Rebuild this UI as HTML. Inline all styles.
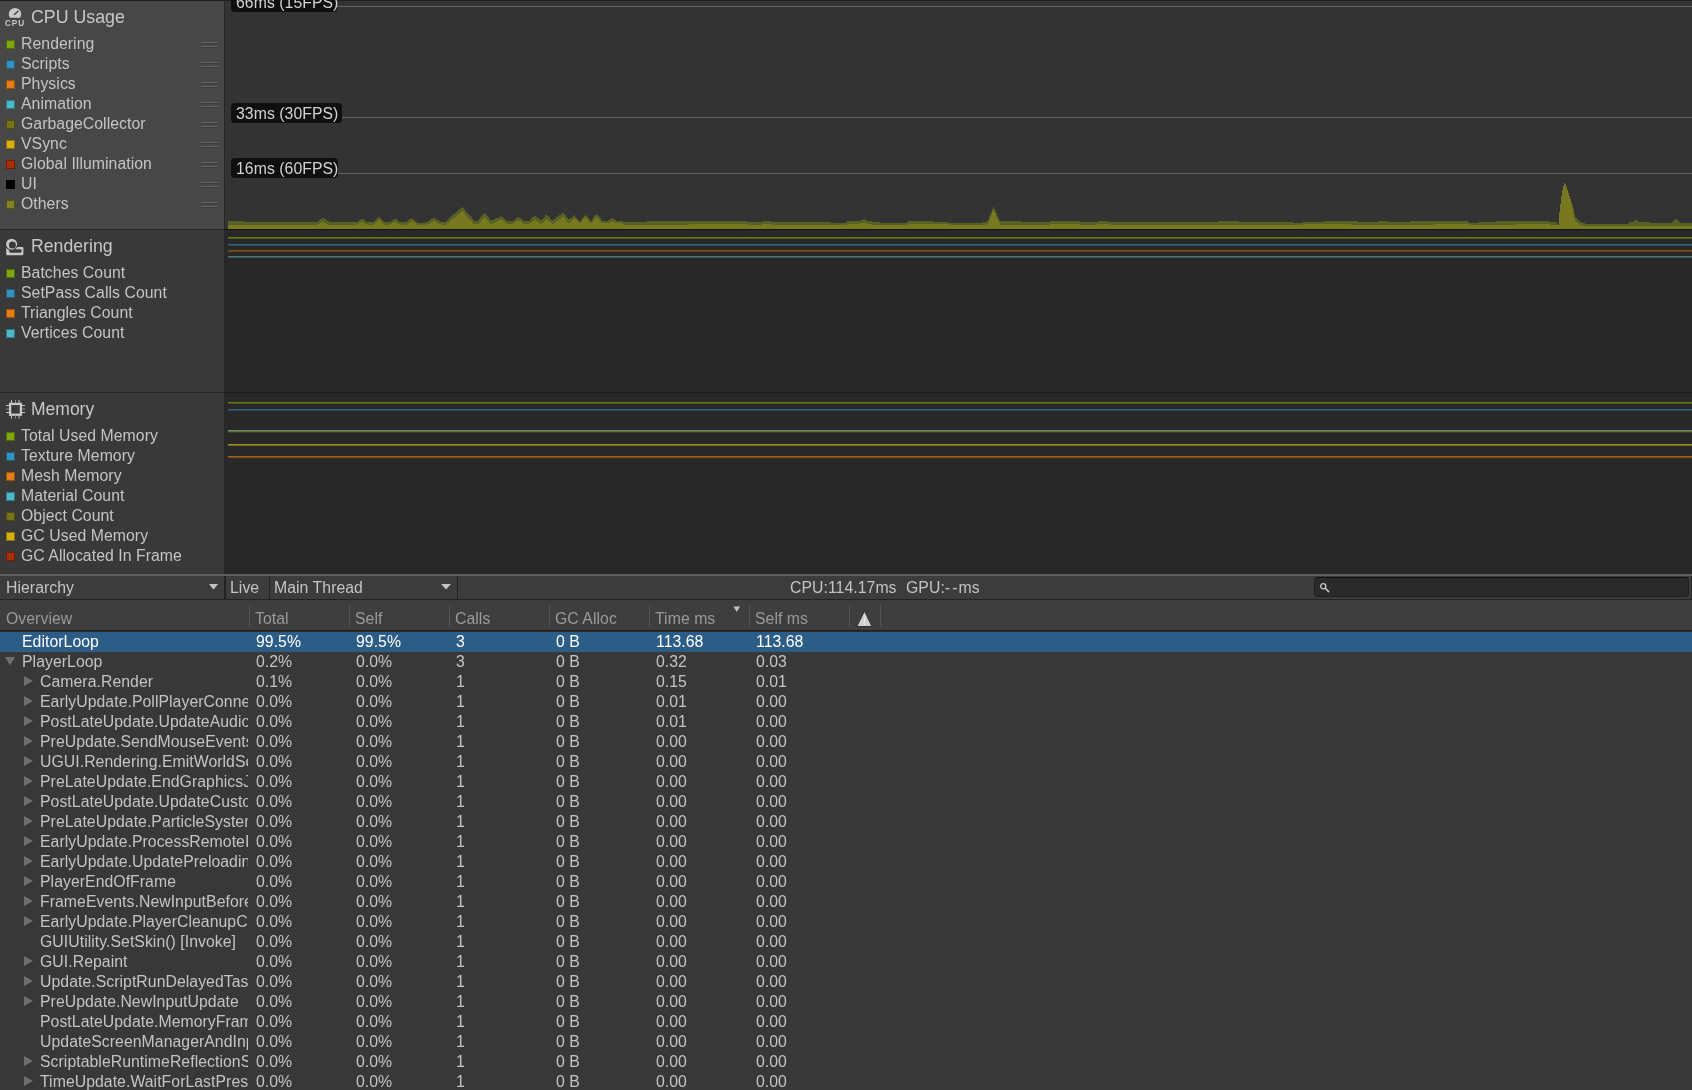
<!DOCTYPE html><html><head><meta charset="utf-8"><title>Profiler</title><style>
html,body{margin:0;padding:0;width:1692px;height:1090px;overflow:hidden;background:#383838;font-family:"Liberation Sans",sans-serif;}
.a{position:absolute}
.t{position:absolute;line-height:20px;white-space:pre;}
</style></head><body><div class="a" style="left:0;top:0;width:1692px;height:1090px;overflow:hidden;will-change:transform">
<div class="a" style="left:0px;top:0px;width:1692px;height:1px;background:#1f1f1f;"></div>
<div class="a" style="left:0px;top:1px;width:224px;height:228px;background:#474747;"></div>
<div class="a" style="left:225px;top:1px;width:1467px;height:228px;background:#333333;"></div>
<div class="a" style="left:224px;top:0px;width:1px;height:574px;background:#262626;"></div>
<div class="a" style="left:0px;top:229px;width:224px;height:1px;background:#262626;"></div>
<div class="a" style="left:224px;top:229px;width:1468px;height:1px;background:#151515;"></div>
<div class="a" style="left:0px;top:230px;width:224px;height:162px;background:#393939;"></div>
<div class="a" style="left:225px;top:230px;width:1467px;height:162px;background:#282828;"></div>
<div class="a" style="left:0px;top:392px;width:224px;height:1px;background:#262626;"></div>
<div class="a" style="left:224px;top:392px;width:1468px;height:1px;background:#1a1a1a;"></div>
<div class="a" style="left:0px;top:393px;width:224px;height:181px;background:#393939;"></div>
<div class="a" style="left:225px;top:393px;width:1467px;height:181px;background:#282828;"></div>
<div class="a" style="left:0px;top:574px;width:1692px;height:2px;background:#5f5f5f;"></div>
<div class="a" style="left:0px;top:576px;width:1692px;height:23px;background:#3c3c3c;"></div>
<div class="a" style="left:0px;top:599px;width:1692px;height:1px;background:#232323;"></div>
<div class="a" style="left:0px;top:600px;width:1692px;height:30px;background:#3e3e3e;"></div>
<div class="a" style="left:0px;top:630px;width:1692px;height:1px;background:#1f1f1f;"></div>
<div class="a" style="left:0px;top:631px;width:1692px;height:1px;background:#2d2b29;"></div>
<div class="a" style="left:0px;top:632px;width:1692px;height:458px;background:#383838;"></div>
<div class="a" style="left:337px;top:6px;width:1355px;height:1px;background:#646464;"></div>
<div class="a" style="left:342px;top:117px;width:1350px;height:1px;background:#646464;"></div>
<div class="a" style="left:338px;top:173px;width:1354px;height:1px;background:#646464;"></div>
<svg class="a" style="left:225px;top:0px" width="1467" height="229" viewBox="0 0 1467 229"><polygon points="3.0,221.10 4.0,221.10 5.0,221.10 6.0,221.10 7.0,221.10 8.0,221.10 9.0,221.10 10.0,221.10 11.0,221.10 12.0,221.10 13.0,221.10 14.0,221.10 15.0,221.10 16.0,221.10 17.0,221.10 18.0,221.10 19.0,221.60 20.0,221.60 21.0,221.60 22.0,221.60 23.0,221.60 24.0,221.60 25.0,221.60 26.0,221.60 27.0,221.60 28.0,221.60 29.0,221.60 30.0,221.60 31.0,221.60 32.0,221.60 33.0,221.60 34.0,221.60 35.0,221.60 36.0,221.60 37.0,221.60 38.0,221.60 39.0,221.60 40.0,221.60 41.0,221.60 42.0,221.60 43.0,221.60 44.0,221.60 45.0,222.40 46.0,222.40 47.0,222.40 48.0,222.40 49.0,222.40 50.0,222.40 51.0,222.40 52.0,222.40 53.0,222.40 54.0,222.40 55.0,222.40 56.0,222.40 57.0,222.40 58.0,222.40 59.0,222.40 60.0,222.40 61.0,222.40 62.0,222.40 63.0,222.40 64.0,222.40 65.0,222.40 66.0,222.40 67.0,222.40 68.0,222.40 69.0,222.40 70.0,222.40 71.0,222.40 72.0,222.40 73.0,222.40 74.0,222.40 75.0,222.40 76.0,222.40 77.0,222.40 78.0,222.40 79.0,222.40 80.0,222.40 81.0,222.40 82.0,222.40 83.0,222.40 84.0,222.40 85.0,222.40 86.0,222.40 87.0,222.40 88.0,222.40 89.0,222.40 90.0,222.40 91.0,222.40 92.0,222.40 93.0,221.90 94.0,220.60 95.0,219.45 96.0,218.95 97.0,218.45 98.0,217.95 99.0,218.45 100.0,218.95 101.0,219.45 102.0,220.60 103.0,221.10 104.0,221.60 105.0,221.60 106.0,221.60 107.0,221.60 108.0,221.60 109.0,221.60 110.0,221.60 111.0,221.60 112.0,221.60 113.0,221.60 114.0,221.60 115.0,221.60 116.0,221.90 117.0,221.90 118.0,221.90 119.0,221.90 120.0,221.90 121.0,221.90 122.0,221.90 123.0,221.90 124.0,221.60 125.0,221.60 126.0,221.60 127.0,221.60 128.0,221.60 129.0,221.60 130.0,221.60 131.0,221.60 132.0,221.90 133.0,221.40 134.0,220.25 135.0,219.75 136.0,219.25 137.0,218.75 138.0,219.25 139.0,219.75 140.0,220.25 141.0,221.40 142.0,221.90 143.0,222.40 144.0,222.40 145.0,222.40 146.0,222.40 147.0,222.40 148.0,222.40 149.0,221.57 150.0,220.08 151.0,219.25 152.0,218.42 153.0,217.58 154.0,216.75 155.0,217.58 156.0,218.42 157.0,219.25 158.0,220.08 159.0,221.57 160.0,222.40 161.0,222.40 162.0,222.40 163.0,222.40 164.0,222.40 165.0,221.90 166.0,221.40 167.0,220.25 168.0,219.75 169.0,219.25 170.0,218.75 171.0,219.25 172.0,219.75 173.0,220.25 174.0,221.40 175.0,221.90 176.0,222.40 177.0,222.40 178.0,222.40 179.0,222.40 180.0,222.40 181.0,222.40 182.0,221.73 183.0,220.42 184.0,219.75 185.0,219.08 186.0,218.42 187.0,218.55 188.0,219.22 189.0,219.88 190.0,220.55 191.0,221.22 192.0,222.53 193.0,223.20 194.0,223.20 195.0,223.20 196.0,223.20 197.0,223.20 198.0,223.20 199.0,223.20 200.0,221.90 201.0,221.90 202.0,221.90 203.0,221.83 204.0,220.61 205.0,220.04 206.0,219.46 207.0,218.89 208.0,218.32 209.0,217.75 210.0,218.32 211.0,218.89 212.0,219.46 213.0,220.04 214.0,220.61 215.0,221.83 216.0,221.90 217.0,221.90 218.0,221.90 219.0,221.90 220.0,221.90 221.0,221.90 222.0,220.60 223.0,219.77 224.0,218.15 225.0,217.33 226.0,216.50 227.0,215.68 228.0,214.86 229.0,214.03 230.0,213.21 231.0,212.39 232.0,211.56 233.0,210.74 234.0,209.91 235.0,209.09 236.0,208.27 237.0,207.44 237.6,206.95 238.0,207.46 239.0,208.73 240.0,210.00 241.0,211.28 242.0,212.55 243.0,213.82 244.0,215.10 245.0,215.56 246.0,216.72 247.0,217.89 248.0,219.70 249.0,220.90 250.0,220.90 251.0,220.90 252.0,220.90 253.0,220.90 254.0,219.75 255.0,218.03 256.0,216.95 257.0,215.87 258.0,214.80 259.0,213.72 259.9,212.75 260.0,212.88 261.0,214.15 262.0,215.42 263.0,216.70 264.0,217.97 265.0,219.89 266.0,220.40 267.0,220.40 268.0,220.25 269.0,219.74 270.0,218.59 271.0,218.08 272.0,217.57 273.0,217.87 274.0,217.36 275.0,216.86 276.0,216.35 276.2,216.25 277.0,216.85 278.0,217.61 279.0,218.36 280.0,219.12 281.0,220.52 282.0,221.20 283.0,221.20 284.0,221.20 285.0,221.20 286.0,221.20 287.0,221.20 288.0,221.20 289.0,220.50 290.0,219.14 291.0,218.44 292.0,217.74 293.0,217.03 293.4,216.75 294.0,217.17 295.0,217.88 296.0,218.58 297.0,219.28 298.0,220.64 299.0,221.20 300.0,221.20 301.0,221.20 302.0,221.20 303.0,221.20 304.0,221.20 305.0,220.54 306.0,218.44 307.0,217.78 308.0,217.13 309.0,216.47 309.8,215.95 310.0,216.08 311.0,216.74 312.0,217.39 313.0,218.05 314.0,218.70 315.0,220.01 316.0,220.40 317.0,219.78 318.0,218.09 319.0,217.05 320.0,216.01 321.0,214.97 321.4,214.55 322.0,215.11 323.0,216.04 324.0,216.96 325.0,217.89 326.0,219.47 327.0,220.40 328.0,220.40 329.0,219.84 330.0,218.49 331.0,217.79 332.0,217.09 333.0,216.39 334.0,215.69 335.0,214.99 336.0,214.29 337.0,213.59 338.0,212.89 338.2,212.75 339.0,213.68 340.0,214.85 341.0,216.02 342.0,217.18 343.0,218.35 344.0,220.17 345.0,218.60 346.0,217.45 347.0,217.90 348.0,216.75 349.0,215.60 349.3,215.25 350.0,216.00 351.0,217.07 352.0,218.14 353.0,219.21 354.0,220.28 355.0,221.50 356.0,220.05 357.0,218.76 358.0,217.46 359.0,216.16 360.0,214.87 360.4,214.35 361.0,215.10 362.0,216.35 363.0,217.60 364.0,218.85 365.0,220.10 366.0,221.50 367.0,220.08 368.0,218.00 369.0,216.73 370.0,215.46 371.0,214.19 371.5,213.55 372.0,214.16 373.0,215.39 374.0,216.62 375.0,217.85 376.0,219.08 377.0,220.70 378.0,220.70 379.0,220.70 380.0,220.70 381.0,220.70 382.0,220.70 383.0,220.70 384.0,220.27 385.0,219.16 386.0,218.70 387.0,218.24 387.4,218.05 388.0,218.33 389.0,218.80 390.0,219.28 391.0,220.40 392.0,220.70 393.0,220.70 394.0,220.70 395.0,220.70 396.0,220.70 397.0,220.70 398.0,221.70 399.0,221.70 400.0,222.40 401.0,222.40 402.0,222.40 403.0,222.40 404.0,222.40 405.0,222.40 406.0,222.40 407.0,222.40 408.0,222.40 409.0,222.40 410.0,222.40 411.0,222.40 412.0,222.40 413.0,222.40 414.0,222.40 415.0,222.40 416.0,222.40 417.0,222.40 418.0,222.40 419.0,222.40 420.0,222.40 421.0,222.40 422.0,221.10 423.0,221.10 424.0,221.10 425.0,221.10 426.0,221.10 427.0,221.10 428.0,221.10 429.0,221.10 430.0,221.10 431.0,221.10 432.0,221.10 433.0,221.10 434.0,221.10 435.0,221.10 436.0,221.10 437.0,221.10 438.0,221.10 439.0,221.10 440.0,221.10 441.0,221.10 442.0,221.10 443.0,221.10 444.0,221.10 445.0,221.10 446.0,221.10 447.0,221.10 448.0,221.10 449.0,221.10 450.0,221.10 451.0,221.10 452.0,221.10 453.0,221.10 454.0,221.10 455.0,221.10 456.0,221.10 457.0,221.10 458.0,221.10 459.0,221.10 460.0,221.10 461.0,221.10 462.0,221.10 463.0,221.10 464.0,221.10 465.0,221.40 466.0,221.40 467.0,221.40 468.0,221.40 469.0,221.40 470.0,221.40 471.0,221.40 472.0,221.40 473.0,221.40 474.0,221.40 475.0,221.40 476.0,221.40 477.0,221.40 478.0,221.40 479.0,221.40 480.0,221.40 481.0,221.40 482.0,221.40 483.0,221.40 484.0,221.40 485.0,221.40 486.0,221.40 487.0,221.40 488.0,221.40 489.0,221.40 490.0,221.40 491.0,221.40 492.0,221.40 493.0,221.40 494.0,221.40 495.0,221.40 496.0,221.40 497.0,221.40 498.0,221.40 499.0,221.40 500.0,221.40 501.0,221.40 502.0,221.40 503.0,221.40 504.0,221.40 505.0,221.40 506.0,221.40 507.0,221.40 508.0,221.40 509.0,221.40 510.0,221.40 511.0,221.40 512.0,221.40 513.0,221.40 514.0,221.40 515.0,221.40 516.0,221.40 517.0,221.40 518.0,221.40 519.0,221.40 520.0,221.40 521.0,221.40 522.0,221.40 523.0,221.90 524.0,221.90 525.0,221.90 526.0,221.90 527.0,221.90 528.0,221.90 529.0,221.90 530.0,221.90 531.0,221.90 532.0,221.90 533.0,221.90 534.0,221.90 535.0,221.90 536.0,221.90 537.0,221.90 538.0,221.40 539.0,221.40 540.0,221.40 541.0,221.40 542.0,221.40 543.0,221.40 544.0,221.40 545.0,221.40 546.0,221.40 547.0,221.90 548.0,221.90 549.0,221.90 550.0,221.90 551.0,221.90 552.0,221.90 553.0,221.90 554.0,221.90 555.0,221.90 556.0,221.90 557.0,221.90 558.0,221.90 559.0,221.90 560.0,221.90 561.0,221.90 562.0,221.90 563.0,221.90 564.0,221.90 565.0,221.90 566.0,221.90 567.0,221.90 568.0,221.90 569.0,221.90 570.0,221.90 571.0,221.90 572.0,221.90 573.0,221.90 574.0,221.90 575.0,221.90 576.0,221.90 577.0,221.90 578.0,221.90 579.0,221.60 580.0,221.60 581.0,221.60 582.0,221.60 583.0,221.60 584.0,221.60 585.0,221.60 586.0,221.60 587.0,221.60 588.0,221.60 589.0,221.60 590.0,221.60 591.0,221.60 592.0,221.60 593.0,221.60 594.0,221.60 595.0,221.60 596.0,221.60 597.0,221.60 598.0,221.60 599.0,221.60 600.0,221.60 601.0,221.60 602.0,221.60 603.0,221.60 604.0,221.60 605.0,221.60 606.0,223.20 607.0,223.20 608.0,223.20 609.0,223.20 610.0,223.20 611.0,223.20 612.0,223.20 613.0,223.20 614.0,223.20 615.0,223.20 616.0,223.20 617.0,223.20 618.0,223.20 619.0,223.20 620.0,223.20 621.0,223.20 622.0,221.40 623.0,221.40 624.0,221.40 625.0,221.40 626.0,221.40 627.0,221.40 628.0,221.40 629.0,221.40 630.0,221.40 631.0,221.40 632.0,221.40 633.0,221.40 634.0,221.15 635.0,220.90 636.0,220.00 637.0,219.75 638.0,219.50 639.0,219.25 640.0,219.58 641.0,219.92 642.0,220.90 643.0,221.23 644.0,221.40 645.0,221.40 646.0,221.40 647.0,221.60 648.0,221.60 649.0,221.60 650.0,221.60 651.0,221.60 652.0,221.60 653.0,221.60 654.0,221.60 655.0,222.70 656.0,222.70 657.0,222.70 658.0,222.70 659.0,222.70 660.0,222.70 661.0,222.70 662.0,222.70 663.0,222.70 664.0,222.70 665.0,222.70 666.0,222.70 667.0,222.70 668.0,222.70 669.0,222.70 670.0,222.70 671.0,222.70 672.0,222.70 673.0,222.70 674.0,222.70 675.0,222.70 676.0,223.20 677.0,223.20 678.0,223.20 679.0,223.20 680.0,223.20 681.0,223.20 682.0,223.20 683.0,221.40 684.0,221.40 685.0,221.40 686.0,221.40 687.0,221.40 688.0,221.40 689.0,221.40 690.0,221.40 691.0,221.40 692.0,221.40 693.0,221.40 694.0,221.40 695.0,221.40 696.0,221.40 697.0,221.40 698.0,221.40 699.0,221.40 700.0,221.40 701.0,221.40 702.0,221.40 703.0,221.40 704.0,221.40 705.0,221.40 706.0,221.40 707.0,221.40 708.0,221.40 709.0,222.20 710.0,222.20 711.0,222.20 712.0,222.20 713.0,222.20 714.0,222.20 715.0,222.20 716.0,222.20 717.0,222.20 718.0,222.20 719.0,222.20 720.0,222.20 721.0,222.20 722.0,222.20 723.0,222.20 724.0,223.20 725.0,223.20 726.0,223.20 727.0,223.20 728.0,223.20 729.0,223.20 730.0,223.20 731.0,223.20 732.0,223.20 733.0,223.20 734.0,223.20 735.0,223.20 736.0,223.20 737.0,223.20 738.0,223.20 739.0,223.20 740.0,223.20 741.0,223.20 742.0,223.20 743.0,223.20 744.0,223.20 745.0,223.20 746.0,223.20 747.0,223.20 748.0,223.20 749.0,223.20 750.0,223.20 751.0,223.20 752.0,223.20 753.0,223.20 754.0,223.20 755.0,223.20 756.0,223.20 757.0,223.20 758.0,222.40 759.0,222.40 760.0,222.40 761.0,222.40 762.0,222.40 763.0,220.04 764.0,217.62 765.0,215.21 766.0,212.79 767.0,210.38 768.0,207.96 768.5,206.75 769.0,207.87 770.0,210.10 771.0,212.33 772.0,214.56 773.0,216.79 774.0,219.02 775.0,221.10 776.0,221.10 777.0,221.10 778.0,221.10 779.0,221.10 780.0,221.10 781.0,221.10 782.0,221.10 783.0,221.10 784.0,221.10 785.0,221.10 786.0,221.10 787.0,221.10 788.0,221.10 789.0,221.10 790.0,221.10 791.0,221.10 792.0,221.10 793.0,221.10 794.0,221.10 795.0,221.10 796.0,221.90 797.0,221.90 798.0,221.90 799.0,221.90 800.0,221.90 801.0,221.90 802.0,221.90 803.0,221.90 804.0,221.90 805.0,221.90 806.0,221.90 807.0,221.90 808.0,221.90 809.0,221.90 810.0,221.90 811.0,221.90 812.0,221.90 813.0,221.90 814.0,221.90 815.0,221.90 816.0,221.90 817.0,221.90 818.0,221.90 819.0,221.90 820.0,221.90 821.0,221.90 822.0,221.90 823.0,221.90 824.0,221.90 825.0,221.90 826.0,220.60 827.0,220.60 828.0,220.60 829.0,220.60 830.0,220.60 831.0,220.60 832.0,220.60 833.0,220.60 834.0,220.60 835.0,220.60 836.0,220.60 837.0,220.60 838.0,220.60 839.0,220.60 840.0,220.60 841.0,220.60 842.0,220.60 843.0,220.60 844.0,220.60 845.0,220.60 846.0,220.60 847.0,220.60 848.0,220.60 849.0,220.60 850.0,220.60 851.0,220.60 852.0,220.60 853.0,220.60 854.0,220.60 855.0,221.90 856.0,221.90 857.0,221.90 858.0,221.90 859.0,221.90 860.0,221.90 861.0,221.90 862.0,221.90 863.0,221.90 864.0,221.90 865.0,221.90 866.0,221.90 867.0,221.90 868.0,221.90 869.0,221.90 870.0,221.90 871.0,221.90 872.0,221.90 873.0,221.40 874.0,221.40 875.0,221.40 876.0,221.40 877.0,221.40 878.0,221.40 879.0,221.40 880.0,221.40 881.0,221.40 882.0,221.40 883.0,221.40 884.0,221.90 885.0,221.90 886.0,221.90 887.0,221.90 888.0,221.90 889.0,221.90 890.0,221.90 891.0,221.90 892.0,221.90 893.0,221.90 894.0,221.90 895.0,221.90 896.0,221.90 897.0,221.90 898.0,221.90 899.0,221.90 900.0,221.90 901.0,221.90 902.0,221.90 903.0,221.90 904.0,221.90 905.0,221.90 906.0,221.90 907.0,222.40 908.0,222.40 909.0,222.40 910.0,222.40 911.0,222.40 912.0,222.40 913.0,222.40 914.0,222.40 915.0,222.40 916.0,222.40 917.0,222.40 918.0,222.40 919.0,222.40 920.0,222.40 921.0,222.40 922.0,222.40 923.0,222.40 924.0,222.40 925.0,222.40 926.0,222.40 927.0,222.40 928.0,222.40 929.0,222.40 930.0,222.40 931.0,222.40 932.0,222.40 933.0,222.40 934.0,222.40 935.0,222.40 936.0,222.40 937.0,222.40 938.0,222.40 939.0,222.40 940.0,222.40 941.0,222.40 942.0,222.40 943.0,222.40 944.0,222.40 945.0,222.40 946.0,222.40 947.0,222.40 948.0,222.40 949.0,222.40 950.0,222.40 951.0,222.40 952.0,222.40 953.0,222.40 954.0,222.40 955.0,222.40 956.0,222.40 957.0,222.40 958.0,222.40 959.0,222.40 960.0,222.40 961.0,222.40 962.0,222.40 963.0,222.40 964.0,222.40 965.0,222.40 966.0,222.40 967.0,221.90 968.0,221.90 969.0,221.90 970.0,221.90 971.0,221.90 972.0,221.90 973.0,221.90 974.0,221.90 975.0,221.90 976.0,221.90 977.0,221.90 978.0,221.90 979.0,221.90 980.0,221.90 981.0,221.90 982.0,221.90 983.0,221.90 984.0,221.90 985.0,221.90 986.0,221.90 987.0,221.90 988.0,221.90 989.0,221.90 990.0,221.90 991.0,221.90 992.0,221.90 993.0,221.90 994.0,221.10 995.0,221.10 996.0,221.10 997.0,221.10 998.0,221.10 999.0,221.10 1000.0,221.10 1001.0,221.10 1002.0,221.10 1003.0,221.10 1004.0,221.10 1005.0,221.10 1006.0,221.10 1007.0,221.10 1008.0,221.10 1009.0,221.10 1010.0,221.10 1011.0,221.10 1012.0,221.10 1013.0,221.10 1014.0,221.90 1015.0,221.90 1016.0,221.90 1017.0,221.90 1018.0,221.90 1019.0,221.90 1020.0,221.90 1021.0,221.90 1022.0,221.90 1023.0,221.90 1024.0,221.90 1025.0,221.90 1026.0,221.90 1027.0,221.90 1028.0,221.90 1029.0,221.90 1030.0,221.90 1031.0,221.90 1032.0,221.90 1033.0,221.90 1034.0,222.40 1035.0,222.40 1036.0,222.40 1037.0,222.40 1038.0,222.40 1039.0,222.40 1040.0,222.40 1041.0,222.40 1042.0,222.40 1043.0,222.40 1044.0,222.40 1045.0,222.40 1046.0,222.40 1047.0,222.40 1048.0,222.40 1049.0,222.40 1050.0,222.40 1051.0,222.40 1052.0,222.40 1053.0,222.40 1054.0,222.40 1055.0,222.40 1056.0,222.40 1057.0,222.40 1058.0,222.40 1059.0,222.40 1060.0,222.40 1061.0,222.40 1062.0,222.40 1063.0,222.40 1064.0,222.40 1065.0,222.40 1066.0,222.40 1067.0,222.40 1068.0,222.40 1069.0,222.70 1070.0,222.70 1071.0,222.70 1072.0,222.70 1073.0,222.70 1074.0,222.70 1075.0,222.70 1076.0,222.70 1077.0,222.70 1078.0,222.70 1079.0,222.20 1080.0,222.20 1081.0,222.20 1082.0,222.20 1083.0,222.20 1084.0,222.20 1085.0,222.20 1086.0,222.20 1087.0,222.20 1088.0,222.20 1089.0,222.20 1090.0,222.20 1091.0,222.20 1092.0,222.20 1093.0,222.20 1094.0,222.20 1095.0,222.20 1096.0,222.20 1097.0,222.20 1098.0,222.20 1099.0,221.40 1100.0,221.40 1101.0,221.40 1102.0,221.40 1103.0,221.40 1104.0,221.40 1105.0,221.40 1106.0,221.40 1107.0,221.40 1108.0,221.40 1109.0,221.40 1110.0,221.40 1111.0,221.40 1112.0,221.40 1113.0,221.40 1114.0,221.40 1115.0,221.40 1116.0,221.40 1117.0,221.40 1118.0,221.40 1119.0,221.40 1120.0,221.40 1121.0,221.40 1122.0,221.40 1123.0,221.40 1124.0,221.40 1125.0,221.40 1126.0,221.10 1127.0,221.10 1128.0,221.10 1129.0,221.10 1130.0,221.10 1131.0,221.10 1132.0,221.10 1133.0,221.90 1134.0,221.90 1135.0,221.90 1136.0,221.90 1137.0,221.90 1138.0,221.90 1139.0,221.90 1140.0,221.90 1141.0,221.90 1142.0,221.90 1143.0,221.90 1144.0,221.90 1145.0,221.90 1146.0,221.90 1147.0,221.90 1148.0,221.90 1149.0,221.90 1150.0,221.90 1151.0,221.90 1152.0,221.90 1153.0,221.90 1154.0,221.10 1155.0,221.10 1156.0,221.10 1157.0,221.10 1158.0,221.10 1159.0,221.10 1160.0,221.10 1161.0,221.10 1162.0,221.10 1163.0,221.60 1164.0,221.60 1165.0,221.60 1166.0,221.60 1167.0,221.60 1168.0,221.60 1169.0,221.60 1170.0,221.60 1171.0,221.60 1172.0,221.60 1173.0,221.60 1174.0,221.60 1175.0,221.60 1176.0,221.60 1177.0,221.60 1178.0,221.60 1179.0,221.60 1180.0,221.60 1181.0,221.60 1182.0,221.60 1183.0,221.60 1184.0,221.60 1185.0,221.60 1186.0,221.10 1187.0,221.10 1188.0,221.10 1189.0,221.10 1190.0,221.10 1191.0,221.10 1192.0,221.10 1193.0,221.10 1194.0,221.10 1195.0,221.10 1196.0,221.10 1197.0,221.10 1198.0,221.10 1199.0,221.10 1200.0,221.10 1201.0,221.10 1202.0,221.10 1203.0,221.10 1204.0,221.10 1205.0,221.10 1206.0,221.10 1207.0,221.10 1208.0,221.10 1209.0,221.10 1210.0,221.10 1211.0,220.60 1212.0,220.60 1213.0,220.60 1214.0,220.60 1215.0,220.60 1216.0,220.60 1217.0,220.60 1218.0,220.60 1219.0,220.60 1220.0,220.60 1221.0,220.60 1222.0,220.60 1223.0,220.60 1224.0,220.60 1225.0,220.60 1226.0,220.60 1227.0,220.60 1228.0,220.60 1229.0,220.60 1230.0,220.60 1231.0,220.60 1232.0,220.60 1233.0,220.60 1234.0,220.60 1235.0,220.60 1236.0,220.60 1237.0,220.60 1238.0,220.60 1239.0,220.60 1240.0,220.60 1241.0,220.60 1242.0,220.60 1243.0,220.60 1244.0,223.20 1245.0,223.20 1246.0,223.20 1247.0,223.20 1248.0,223.20 1249.0,223.20 1250.0,223.20 1251.0,223.20 1252.0,223.20 1253.0,223.20 1254.0,222.40 1255.0,222.40 1256.0,222.40 1257.0,222.40 1258.0,222.40 1259.0,222.40 1260.0,222.40 1261.0,222.40 1262.0,222.40 1263.0,222.40 1264.0,222.40 1265.0,222.40 1266.0,222.40 1267.0,222.40 1268.0,222.40 1269.0,222.40 1270.0,222.40 1271.0,221.10 1272.0,221.10 1273.0,221.10 1274.0,221.10 1275.0,221.10 1276.0,221.10 1277.0,221.10 1278.0,221.10 1279.0,221.10 1280.0,221.10 1281.0,221.10 1282.0,221.10 1283.0,221.10 1284.0,221.10 1285.0,221.10 1286.0,221.10 1287.0,221.10 1288.0,221.10 1289.0,221.10 1290.0,221.10 1291.0,221.10 1292.0,221.40 1293.0,221.40 1294.0,221.40 1295.0,221.40 1296.0,221.40 1297.0,221.40 1298.0,221.40 1299.0,221.40 1300.0,221.40 1301.0,221.40 1302.0,221.40 1303.0,221.40 1304.0,221.40 1305.0,221.40 1306.0,221.40 1307.0,221.40 1308.0,221.40 1309.0,221.40 1310.0,221.40 1311.0,221.40 1312.0,221.40 1313.0,221.40 1314.0,221.40 1315.0,221.40 1316.0,221.40 1317.0,221.40 1318.0,221.40 1319.0,221.40 1320.0,221.40 1321.0,221.40 1322.0,221.40 1323.0,221.40 1324.0,221.40 1325.0,222.40 1326.0,222.40 1327.0,222.40 1328.0,222.40 1329.0,222.40 1330.0,222.40 1331.0,222.40 1332.0,222.40 1333.0,225.00 1333.5,225.00 1334.0,218.10 1334.3,214.35 1335.0,208.17 1336.0,199.35 1337.0,193.35 1338.0,187.35 1339.0,183.78 1339.4,182.35 1340.0,183.47 1341.0,185.35 1342.0,188.27 1343.0,191.18 1344.0,194.10 1345.0,197.02 1345.8,199.35 1346.0,199.52 1347.0,204.35 1348.0,206.57 1349.0,211.40 1349.9,215.75 1350.0,215.88 1351.0,217.16 1352.0,218.45 1353.0,219.12 1354.0,221.23 1355.0,221.25 1356.0,222.02 1357.0,222.35 1358.0,222.68 1359.0,223.00 1360.0,223.50 1361.0,223.50 1362.0,223.50 1363.0,223.50 1364.0,223.50 1365.0,223.50 1366.0,223.50 1367.0,223.50 1368.0,223.50 1369.0,223.50 1370.0,223.50 1371.0,223.50 1372.0,223.50 1373.0,223.50 1374.0,223.50 1375.0,223.50 1376.0,223.50 1377.0,223.50 1378.0,223.50 1379.0,223.50 1380.0,223.50 1381.0,223.50 1382.0,223.50 1383.0,223.80 1384.0,223.80 1385.0,223.80 1386.0,223.80 1387.0,223.80 1388.0,223.80 1389.0,223.80 1390.0,223.80 1391.0,223.80 1392.0,223.80 1393.0,223.80 1394.0,223.80 1395.0,223.80 1396.0,223.80 1397.0,223.80 1398.0,223.80 1399.0,223.80 1400.0,223.80 1401.0,223.80 1402.0,223.80 1403.0,223.80 1404.0,222.20 1405.0,222.20 1406.0,222.20 1407.0,222.20 1408.0,222.20 1409.0,221.27 1410.0,220.13 1411.0,219.00 1412.0,220.13 1413.0,221.27 1414.0,222.20 1415.0,222.20 1416.0,222.20 1417.0,222.20 1418.0,222.20 1419.0,222.20 1420.0,222.20 1421.0,222.20 1422.0,222.20 1423.0,222.20 1424.0,222.20 1425.0,222.20 1426.0,223.00 1427.0,223.00 1428.0,223.00 1429.0,223.00 1430.0,223.00 1431.0,223.00 1432.0,223.00 1433.0,223.00 1434.0,223.00 1435.0,223.00 1436.0,223.00 1437.0,223.00 1438.0,223.00 1439.0,223.00 1440.0,223.00 1441.0,223.00 1442.0,223.00 1443.0,223.00 1444.0,223.00 1445.0,223.00 1446.0,223.00 1447.0,223.00 1448.0,221.90 1449.0,220.60 1450.0,219.30 1451.0,218.00 1452.0,219.30 1453.0,220.60 1454.0,221.90 1455.0,223.00 1456.0,223.00 1457.0,223.00 1458.0,223.00 1459.0,223.00 1460.0,223.00 1461.0,223.00 1462.0,223.00 1463.0,223.00 1464.0,223.00 1465.0,223.00 1466.0,223.00 1467.0,223.00 1467,229 3,229" fill="#566223" shape-rendering="crispEdges"/><polygon points="3.0,224.50 4.0,224.50 5.0,224.50 6.0,224.50 7.0,224.50 8.0,224.50 9.0,224.50 10.0,224.50 11.0,224.50 12.0,224.50 13.0,224.50 14.0,224.50 15.0,224.50 16.0,224.50 17.0,224.50 18.0,224.50 19.0,225.00 20.0,225.00 21.0,225.00 22.0,225.00 23.0,225.00 24.0,225.00 25.0,225.00 26.0,225.00 27.0,225.00 28.0,225.00 29.0,225.00 30.0,225.00 31.0,225.00 32.0,225.00 33.0,225.00 34.0,225.00 35.0,225.00 36.0,225.00 37.0,225.00 38.0,225.00 39.0,225.00 40.0,225.00 41.0,225.00 42.0,225.00 43.0,225.00 44.0,225.00 45.0,225.00 46.0,225.00 47.0,225.00 48.0,225.00 49.0,225.00 50.0,225.00 51.0,225.00 52.0,225.00 53.0,225.00 54.0,225.00 55.0,225.00 56.0,225.00 57.0,225.00 58.0,225.00 59.0,225.00 60.0,225.00 61.0,225.00 62.0,225.00 63.0,225.00 64.0,225.00 65.0,225.00 66.0,225.00 67.0,225.00 68.0,225.00 69.0,225.00 70.0,225.00 71.0,225.00 72.0,225.00 73.0,225.00 74.0,225.00 75.0,225.00 76.0,225.00 77.0,225.00 78.0,225.00 79.0,225.00 80.0,225.00 81.0,225.00 82.0,225.00 83.0,225.00 84.0,225.00 85.0,225.00 86.0,225.00 87.0,225.00 88.0,225.00 89.0,225.00 90.0,225.00 91.0,225.00 92.0,225.00 93.0,224.50 94.0,224.00 95.0,223.50 96.0,223.00 97.0,222.50 98.0,222.00 99.0,222.50 100.0,223.00 101.0,223.50 102.0,224.00 103.0,224.50 104.0,225.00 105.0,225.00 106.0,225.00 107.0,225.00 108.0,225.00 109.0,225.00 110.0,225.00 111.0,225.00 112.0,225.00 113.0,225.00 114.0,225.00 115.0,225.00 116.0,224.50 117.0,224.50 118.0,224.50 119.0,224.50 120.0,224.50 121.0,224.50 122.0,224.50 123.0,224.50 124.0,225.00 125.0,225.00 126.0,225.00 127.0,225.00 128.0,225.00 129.0,225.00 130.0,225.00 131.0,225.00 132.0,224.50 133.0,224.00 134.0,223.50 135.0,223.00 136.0,222.50 137.0,222.00 138.0,222.50 139.0,223.00 140.0,223.50 141.0,224.00 142.0,224.50 143.0,225.00 144.0,225.00 145.0,225.00 146.0,225.00 147.0,225.00 148.0,225.00 149.0,224.17 150.0,223.33 151.0,222.50 152.0,221.67 153.0,220.83 154.0,220.00 155.0,220.83 156.0,221.67 157.0,222.50 158.0,223.33 159.0,224.17 160.0,225.00 161.0,225.00 162.0,225.00 163.0,225.00 164.0,225.00 165.0,224.50 166.0,224.00 167.0,223.50 168.0,223.00 169.0,222.50 170.0,222.00 171.0,222.50 172.0,223.00 173.0,223.50 174.0,224.00 175.0,224.50 176.0,225.00 177.0,225.00 178.0,225.00 179.0,225.00 180.0,225.00 181.0,225.00 182.0,224.33 183.0,223.67 184.0,223.00 185.0,222.33 186.0,221.67 187.0,221.00 188.0,221.67 189.0,222.33 190.0,223.00 191.0,223.67 192.0,224.33 193.0,225.00 194.0,225.00 195.0,225.00 196.0,225.00 197.0,225.00 198.0,225.00 199.0,225.00 200.0,224.50 201.0,224.50 202.0,224.50 203.0,224.43 204.0,223.86 205.0,223.29 206.0,222.71 207.0,222.14 208.0,221.57 209.0,221.00 210.0,221.57 211.0,222.14 212.0,222.71 213.0,223.29 214.0,223.86 215.0,224.43 216.0,224.50 217.0,224.50 218.0,224.50 219.0,224.50 220.0,224.50 221.0,224.50 222.0,223.85 223.0,223.02 224.0,222.20 225.0,221.38 226.0,220.55 227.0,219.73 228.0,218.91 229.0,218.08 230.0,217.26 231.0,216.44 232.0,215.61 233.0,214.79 234.0,213.96 235.0,213.14 236.0,212.32 237.0,211.49 237.6,211.00 238.0,211.51 239.0,212.78 240.0,214.05 241.0,215.33 242.0,216.60 243.0,217.87 244.0,219.15 245.0,219.61 246.0,220.77 247.0,221.94 248.0,223.10 249.0,224.30 250.0,224.30 251.0,224.30 252.0,224.30 253.0,224.30 254.0,223.15 255.0,222.08 256.0,221.00 257.0,219.92 258.0,218.85 259.0,217.77 259.9,216.80 260.0,216.93 261.0,218.20 262.0,219.47 263.0,220.75 264.0,222.02 265.0,223.29 266.0,223.80 267.0,223.80 268.0,223.65 269.0,223.14 270.0,222.64 271.0,222.13 272.0,221.62 273.0,221.12 274.0,220.61 275.0,220.11 276.0,219.60 276.2,219.50 277.0,220.10 278.0,220.86 279.0,221.61 280.0,222.37 281.0,223.12 282.0,223.80 283.0,223.80 284.0,223.80 285.0,223.80 286.0,223.80 287.0,223.80 288.0,223.80 289.0,223.10 290.0,222.39 291.0,221.69 292.0,220.99 293.0,220.28 293.4,220.00 294.0,220.42 295.0,221.13 296.0,221.83 297.0,222.53 298.0,223.24 299.0,223.80 300.0,223.80 301.0,223.80 302.0,223.80 303.0,223.80 304.0,223.80 305.0,223.14 306.0,222.49 307.0,221.83 308.0,221.18 309.0,220.52 309.8,220.00 310.0,220.13 311.0,220.79 312.0,221.44 313.0,222.10 314.0,222.75 315.0,223.41 316.0,223.80 317.0,223.18 318.0,222.14 319.0,221.10 320.0,220.06 321.0,219.02 321.4,218.60 322.0,219.16 323.0,220.09 324.0,221.01 325.0,221.94 326.0,222.87 327.0,223.80 328.0,223.80 329.0,223.24 330.0,222.54 331.0,221.84 332.0,221.14 333.0,220.44 334.0,219.74 335.0,219.04 336.0,218.34 337.0,217.64 338.0,216.94 338.2,216.80 339.0,217.73 340.0,218.90 341.0,220.07 342.0,221.23 343.0,222.40 344.0,223.57 345.0,222.65 346.0,221.50 347.0,220.35 348.0,219.20 349.0,218.05 349.3,217.70 350.0,218.45 351.0,219.52 352.0,220.59 353.0,221.66 354.0,222.73 355.0,223.30 356.0,222.50 357.0,221.21 358.0,219.91 359.0,218.61 360.0,217.32 360.4,216.80 361.0,217.55 362.0,218.80 363.0,220.05 364.0,221.30 365.0,222.55 366.0,223.30 367.0,222.53 368.0,221.25 369.0,219.98 370.0,218.71 371.0,217.44 371.5,216.80 372.0,217.41 373.0,218.64 374.0,219.87 375.0,221.10 376.0,222.33 377.0,223.30 378.0,223.30 379.0,223.30 380.0,223.30 381.0,223.30 382.0,223.30 383.0,223.30 384.0,222.87 385.0,222.41 386.0,221.95 387.0,221.49 387.4,221.30 388.0,221.58 389.0,222.05 390.0,222.53 391.0,223.00 392.0,223.30 393.0,223.30 394.0,223.30 395.0,223.30 396.0,223.30 397.0,223.30 398.0,224.30 399.0,224.30 400.0,225.00 401.0,225.00 402.0,225.00 403.0,225.00 404.0,225.00 405.0,225.00 406.0,225.00 407.0,225.00 408.0,225.00 409.0,225.00 410.0,225.00 411.0,225.00 412.0,225.00 413.0,225.00 414.0,225.00 415.0,225.00 416.0,225.00 417.0,225.00 418.0,225.00 419.0,225.00 420.0,225.00 421.0,225.00 422.0,224.50 423.0,224.50 424.0,224.50 425.0,224.50 426.0,224.50 427.0,224.50 428.0,224.50 429.0,224.50 430.0,224.50 431.0,224.50 432.0,224.50 433.0,224.50 434.0,224.50 435.0,224.50 436.0,224.50 437.0,224.50 438.0,224.50 439.0,224.50 440.0,224.50 441.0,224.50 442.0,224.50 443.0,224.50 444.0,224.50 445.0,224.50 446.0,224.50 447.0,224.50 448.0,224.50 449.0,224.50 450.0,224.50 451.0,224.50 452.0,224.50 453.0,224.50 454.0,224.50 455.0,224.50 456.0,224.50 457.0,224.50 458.0,224.50 459.0,224.50 460.0,224.50 461.0,224.50 462.0,224.50 463.0,224.50 464.0,224.50 465.0,224.00 466.0,224.00 467.0,224.00 468.0,224.00 469.0,224.00 470.0,224.00 471.0,224.00 472.0,224.00 473.0,224.00 474.0,224.00 475.0,224.00 476.0,224.00 477.0,224.00 478.0,224.00 479.0,224.00 480.0,224.00 481.0,224.00 482.0,224.00 483.0,224.00 484.0,224.00 485.0,224.00 486.0,224.00 487.0,224.00 488.0,224.00 489.0,224.00 490.0,224.00 491.0,224.00 492.0,224.00 493.0,224.00 494.0,224.00 495.0,224.00 496.0,224.00 497.0,224.00 498.0,224.00 499.0,224.00 500.0,224.00 501.0,224.00 502.0,224.00 503.0,224.00 504.0,224.00 505.0,224.00 506.0,224.00 507.0,224.00 508.0,224.00 509.0,224.00 510.0,224.00 511.0,224.00 512.0,224.00 513.0,224.00 514.0,224.00 515.0,224.00 516.0,224.00 517.0,224.00 518.0,224.00 519.0,224.00 520.0,224.00 521.0,224.00 522.0,224.00 523.0,224.50 524.0,224.50 525.0,224.50 526.0,224.50 527.0,224.50 528.0,224.50 529.0,224.50 530.0,224.50 531.0,224.50 532.0,224.50 533.0,224.50 534.0,224.50 535.0,224.50 536.0,224.50 537.0,224.50 538.0,224.00 539.0,224.00 540.0,224.00 541.0,224.00 542.0,224.00 543.0,224.00 544.0,224.00 545.0,224.00 546.0,224.00 547.0,224.50 548.0,224.50 549.0,224.50 550.0,224.50 551.0,224.50 552.0,224.50 553.0,224.50 554.0,224.50 555.0,224.50 556.0,224.50 557.0,224.50 558.0,224.50 559.0,224.50 560.0,224.50 561.0,224.50 562.0,224.50 563.0,224.50 564.0,224.50 565.0,224.50 566.0,224.50 567.0,224.50 568.0,224.50 569.0,224.50 570.0,224.50 571.0,224.50 572.0,224.50 573.0,224.50 574.0,224.50 575.0,224.50 576.0,224.50 577.0,224.50 578.0,224.50 579.0,225.00 580.0,225.00 581.0,225.00 582.0,225.00 583.0,225.00 584.0,225.00 585.0,225.00 586.0,225.00 587.0,225.00 588.0,225.00 589.0,225.00 590.0,225.00 591.0,225.00 592.0,225.00 593.0,225.00 594.0,225.00 595.0,225.00 596.0,225.00 597.0,225.00 598.0,225.00 599.0,225.00 600.0,225.00 601.0,225.00 602.0,225.00 603.0,225.00 604.0,225.00 605.0,225.00 606.0,225.00 607.0,225.00 608.0,225.00 609.0,225.00 610.0,225.00 611.0,225.00 612.0,225.00 613.0,225.00 614.0,225.00 615.0,225.00 616.0,225.00 617.0,225.00 618.0,225.00 619.0,225.00 620.0,225.00 621.0,225.00 622.0,224.00 623.0,224.00 624.0,224.00 625.0,224.00 626.0,224.00 627.0,224.00 628.0,224.00 629.0,224.00 630.0,224.00 631.0,224.00 632.0,224.00 633.0,224.00 634.0,223.75 635.0,223.50 636.0,223.25 637.0,223.00 638.0,222.75 639.0,222.50 640.0,222.83 641.0,223.17 642.0,223.50 643.0,223.83 644.0,224.00 645.0,224.00 646.0,224.00 647.0,225.00 648.0,225.00 649.0,225.00 650.0,225.00 651.0,225.00 652.0,225.00 653.0,225.00 654.0,225.00 655.0,224.50 656.0,224.50 657.0,224.50 658.0,224.50 659.0,224.50 660.0,224.50 661.0,224.50 662.0,224.50 663.0,224.50 664.0,224.50 665.0,224.50 666.0,224.50 667.0,224.50 668.0,224.50 669.0,224.50 670.0,224.50 671.0,224.50 672.0,224.50 673.0,224.50 674.0,224.50 675.0,224.50 676.0,225.00 677.0,225.00 678.0,225.00 679.0,225.00 680.0,225.00 681.0,225.00 682.0,225.00 683.0,224.00 684.0,224.00 685.0,224.00 686.0,224.00 687.0,224.00 688.0,224.00 689.0,224.00 690.0,224.00 691.0,224.00 692.0,224.00 693.0,224.00 694.0,224.00 695.0,224.00 696.0,224.00 697.0,224.00 698.0,224.00 699.0,224.00 700.0,224.00 701.0,224.00 702.0,224.00 703.0,224.00 704.0,224.00 705.0,224.00 706.0,224.00 707.0,224.00 708.0,224.00 709.0,224.00 710.0,224.00 711.0,224.00 712.0,224.00 713.0,224.00 714.0,224.00 715.0,224.00 716.0,224.00 717.0,224.00 718.0,224.00 719.0,224.00 720.0,224.00 721.0,224.00 722.0,224.00 723.0,224.00 724.0,225.00 725.0,225.00 726.0,225.00 727.0,225.00 728.0,225.00 729.0,225.00 730.0,225.00 731.0,225.00 732.0,225.00 733.0,225.00 734.0,225.00 735.0,225.00 736.0,225.00 737.0,225.00 738.0,225.00 739.0,225.00 740.0,225.00 741.0,225.00 742.0,225.00 743.0,225.00 744.0,225.00 745.0,225.00 746.0,225.00 747.0,225.00 748.0,225.00 749.0,225.00 750.0,225.00 751.0,225.00 752.0,225.00 753.0,225.00 754.0,225.00 755.0,225.00 756.0,225.00 757.0,225.00 758.0,225.00 759.0,225.00 760.0,225.00 761.0,225.00 762.0,225.00 763.0,223.29 764.0,220.88 765.0,218.46 766.0,216.04 767.0,213.62 768.0,211.21 768.5,210.00 769.0,211.12 770.0,213.35 771.0,215.58 772.0,217.81 773.0,220.04 774.0,222.27 775.0,224.50 776.0,224.50 777.0,224.50 778.0,224.50 779.0,224.50 780.0,224.50 781.0,224.50 782.0,224.50 783.0,224.50 784.0,224.50 785.0,224.50 786.0,224.50 787.0,224.50 788.0,224.50 789.0,224.50 790.0,224.50 791.0,224.50 792.0,224.50 793.0,224.50 794.0,224.50 795.0,224.50 796.0,224.50 797.0,224.50 798.0,224.50 799.0,224.50 800.0,224.50 801.0,224.50 802.0,224.50 803.0,224.50 804.0,224.50 805.0,224.50 806.0,224.50 807.0,224.50 808.0,224.50 809.0,224.50 810.0,224.50 811.0,224.50 812.0,224.50 813.0,224.50 814.0,224.50 815.0,224.50 816.0,224.50 817.0,224.50 818.0,224.50 819.0,224.50 820.0,224.50 821.0,224.50 822.0,224.50 823.0,224.50 824.0,224.50 825.0,224.50 826.0,224.00 827.0,224.00 828.0,224.00 829.0,224.00 830.0,224.00 831.0,224.00 832.0,224.00 833.0,224.00 834.0,224.00 835.0,224.00 836.0,224.00 837.0,224.00 838.0,224.00 839.0,224.00 840.0,224.00 841.0,224.00 842.0,224.00 843.0,224.00 844.0,224.00 845.0,224.00 846.0,224.00 847.0,224.00 848.0,224.00 849.0,224.00 850.0,224.00 851.0,224.00 852.0,224.00 853.0,224.00 854.0,224.00 855.0,224.50 856.0,224.50 857.0,224.50 858.0,224.50 859.0,224.50 860.0,224.50 861.0,224.50 862.0,224.50 863.0,224.50 864.0,224.50 865.0,224.50 866.0,224.50 867.0,224.50 868.0,224.50 869.0,224.50 870.0,224.50 871.0,224.50 872.0,224.50 873.0,224.00 874.0,224.00 875.0,224.00 876.0,224.00 877.0,224.00 878.0,224.00 879.0,224.00 880.0,224.00 881.0,224.00 882.0,224.00 883.0,224.00 884.0,224.50 885.0,224.50 886.0,224.50 887.0,224.50 888.0,224.50 889.0,224.50 890.0,224.50 891.0,224.50 892.0,224.50 893.0,224.50 894.0,224.50 895.0,224.50 896.0,224.50 897.0,224.50 898.0,224.50 899.0,224.50 900.0,224.50 901.0,224.50 902.0,224.50 903.0,224.50 904.0,224.50 905.0,224.50 906.0,224.50 907.0,225.00 908.0,225.00 909.0,225.00 910.0,225.00 911.0,225.00 912.0,225.00 913.0,225.00 914.0,225.00 915.0,225.00 916.0,225.00 917.0,225.00 918.0,225.00 919.0,225.00 920.0,225.00 921.0,225.00 922.0,225.00 923.0,225.00 924.0,225.00 925.0,225.00 926.0,225.00 927.0,225.00 928.0,225.00 929.0,225.00 930.0,225.00 931.0,225.00 932.0,225.00 933.0,225.00 934.0,225.00 935.0,225.00 936.0,225.00 937.0,225.00 938.0,225.00 939.0,225.00 940.0,225.00 941.0,225.00 942.0,225.00 943.0,225.00 944.0,225.00 945.0,225.00 946.0,225.00 947.0,225.00 948.0,225.00 949.0,225.00 950.0,225.00 951.0,225.00 952.0,225.00 953.0,225.00 954.0,225.00 955.0,225.00 956.0,225.00 957.0,225.00 958.0,225.00 959.0,225.00 960.0,225.00 961.0,225.00 962.0,225.00 963.0,225.00 964.0,225.00 965.0,225.00 966.0,225.00 967.0,224.50 968.0,224.50 969.0,224.50 970.0,224.50 971.0,224.50 972.0,224.50 973.0,224.50 974.0,224.50 975.0,224.50 976.0,224.50 977.0,224.50 978.0,224.50 979.0,224.50 980.0,224.50 981.0,224.50 982.0,224.50 983.0,224.50 984.0,224.50 985.0,224.50 986.0,224.50 987.0,224.50 988.0,224.50 989.0,224.50 990.0,224.50 991.0,224.50 992.0,224.50 993.0,224.50 994.0,224.50 995.0,224.50 996.0,224.50 997.0,224.50 998.0,224.50 999.0,224.50 1000.0,224.50 1001.0,224.50 1002.0,224.50 1003.0,224.50 1004.0,224.50 1005.0,224.50 1006.0,224.50 1007.0,224.50 1008.0,224.50 1009.0,224.50 1010.0,224.50 1011.0,224.50 1012.0,224.50 1013.0,224.50 1014.0,224.50 1015.0,224.50 1016.0,224.50 1017.0,224.50 1018.0,224.50 1019.0,224.50 1020.0,224.50 1021.0,224.50 1022.0,224.50 1023.0,224.50 1024.0,224.50 1025.0,224.50 1026.0,224.50 1027.0,224.50 1028.0,224.50 1029.0,224.50 1030.0,224.50 1031.0,224.50 1032.0,224.50 1033.0,224.50 1034.0,225.00 1035.0,225.00 1036.0,225.00 1037.0,225.00 1038.0,225.00 1039.0,225.00 1040.0,225.00 1041.0,225.00 1042.0,225.00 1043.0,225.00 1044.0,225.00 1045.0,225.00 1046.0,225.00 1047.0,225.00 1048.0,225.00 1049.0,225.00 1050.0,225.00 1051.0,225.00 1052.0,225.00 1053.0,225.00 1054.0,225.00 1055.0,225.00 1056.0,225.00 1057.0,225.00 1058.0,225.00 1059.0,225.00 1060.0,225.00 1061.0,225.00 1062.0,225.00 1063.0,225.00 1064.0,225.00 1065.0,225.00 1066.0,225.00 1067.0,225.00 1068.0,225.00 1069.0,224.50 1070.0,224.50 1071.0,224.50 1072.0,224.50 1073.0,224.50 1074.0,224.50 1075.0,224.50 1076.0,224.50 1077.0,224.50 1078.0,224.50 1079.0,224.00 1080.0,224.00 1081.0,224.00 1082.0,224.00 1083.0,224.00 1084.0,224.00 1085.0,224.00 1086.0,224.00 1087.0,224.00 1088.0,224.00 1089.0,224.00 1090.0,224.00 1091.0,224.00 1092.0,224.00 1093.0,224.00 1094.0,224.00 1095.0,224.00 1096.0,224.00 1097.0,224.00 1098.0,224.00 1099.0,224.00 1100.0,224.00 1101.0,224.00 1102.0,224.00 1103.0,224.00 1104.0,224.00 1105.0,224.00 1106.0,224.00 1107.0,224.00 1108.0,224.00 1109.0,224.00 1110.0,224.00 1111.0,224.00 1112.0,224.00 1113.0,224.00 1114.0,224.00 1115.0,224.00 1116.0,224.00 1117.0,224.00 1118.0,224.00 1119.0,224.00 1120.0,224.00 1121.0,224.00 1122.0,224.00 1123.0,224.00 1124.0,224.00 1125.0,224.00 1126.0,224.50 1127.0,224.50 1128.0,224.50 1129.0,224.50 1130.0,224.50 1131.0,224.50 1132.0,224.50 1133.0,224.50 1134.0,224.50 1135.0,224.50 1136.0,224.50 1137.0,224.50 1138.0,224.50 1139.0,224.50 1140.0,224.50 1141.0,224.50 1142.0,224.50 1143.0,224.50 1144.0,224.50 1145.0,224.50 1146.0,224.50 1147.0,224.50 1148.0,224.50 1149.0,224.50 1150.0,224.50 1151.0,224.50 1152.0,224.50 1153.0,224.50 1154.0,224.50 1155.0,224.50 1156.0,224.50 1157.0,224.50 1158.0,224.50 1159.0,224.50 1160.0,224.50 1161.0,224.50 1162.0,224.50 1163.0,225.00 1164.0,225.00 1165.0,225.00 1166.0,225.00 1167.0,225.00 1168.0,225.00 1169.0,225.00 1170.0,225.00 1171.0,225.00 1172.0,225.00 1173.0,225.00 1174.0,225.00 1175.0,225.00 1176.0,225.00 1177.0,225.00 1178.0,225.00 1179.0,225.00 1180.0,225.00 1181.0,225.00 1182.0,225.00 1183.0,225.00 1184.0,225.00 1185.0,225.00 1186.0,224.50 1187.0,224.50 1188.0,224.50 1189.0,224.50 1190.0,224.50 1191.0,224.50 1192.0,224.50 1193.0,224.50 1194.0,224.50 1195.0,224.50 1196.0,224.50 1197.0,224.50 1198.0,224.50 1199.0,224.50 1200.0,224.50 1201.0,224.50 1202.0,224.50 1203.0,224.50 1204.0,224.50 1205.0,224.50 1206.0,224.50 1207.0,224.50 1208.0,224.50 1209.0,224.50 1210.0,224.50 1211.0,224.00 1212.0,224.00 1213.0,224.00 1214.0,224.00 1215.0,224.00 1216.0,224.00 1217.0,224.00 1218.0,224.00 1219.0,224.00 1220.0,224.00 1221.0,224.00 1222.0,224.00 1223.0,224.00 1224.0,224.00 1225.0,224.00 1226.0,224.00 1227.0,224.00 1228.0,224.00 1229.0,224.00 1230.0,224.00 1231.0,224.00 1232.0,224.00 1233.0,224.00 1234.0,224.00 1235.0,224.00 1236.0,224.00 1237.0,224.00 1238.0,224.00 1239.0,224.00 1240.0,224.00 1241.0,224.00 1242.0,224.00 1243.0,224.00 1244.0,225.00 1245.0,225.00 1246.0,225.00 1247.0,225.00 1248.0,225.00 1249.0,225.00 1250.0,225.00 1251.0,225.00 1252.0,225.00 1253.0,225.00 1254.0,225.00 1255.0,225.00 1256.0,225.00 1257.0,225.00 1258.0,225.00 1259.0,225.00 1260.0,225.00 1261.0,225.00 1262.0,225.00 1263.0,225.00 1264.0,225.00 1265.0,225.00 1266.0,225.00 1267.0,225.00 1268.0,225.00 1269.0,225.00 1270.0,225.00 1271.0,224.50 1272.0,224.50 1273.0,224.50 1274.0,224.50 1275.0,224.50 1276.0,224.50 1277.0,224.50 1278.0,224.50 1279.0,224.50 1280.0,224.50 1281.0,224.50 1282.0,224.50 1283.0,224.50 1284.0,224.50 1285.0,224.50 1286.0,224.50 1287.0,224.50 1288.0,224.50 1289.0,224.50 1290.0,224.50 1291.0,224.50 1292.0,224.00 1293.0,224.00 1294.0,224.00 1295.0,224.00 1296.0,224.00 1297.0,224.00 1298.0,224.00 1299.0,224.00 1300.0,224.00 1301.0,224.00 1302.0,224.00 1303.0,224.00 1304.0,224.00 1305.0,224.00 1306.0,224.00 1307.0,224.00 1308.0,224.00 1309.0,224.00 1310.0,224.00 1311.0,224.00 1312.0,224.00 1313.0,224.00 1314.0,224.00 1315.0,224.00 1316.0,224.00 1317.0,224.00 1318.0,224.00 1319.0,224.00 1320.0,224.00 1321.0,224.00 1322.0,224.00 1323.0,224.00 1324.0,224.00 1325.0,225.00 1326.0,225.00 1327.0,225.00 1328.0,225.00 1329.0,225.00 1330.0,225.00 1331.0,225.00 1332.0,225.00 1333.0,225.00 1333.5,225.00 1334.0,218.75 1334.3,215.00 1335.0,208.82 1336.0,200.00 1337.0,194.00 1338.0,188.00 1339.0,184.43 1339.4,183.00 1340.0,184.12 1341.0,186.00 1342.0,188.92 1343.0,191.83 1344.0,194.75 1345.0,197.67 1345.8,200.00 1346.0,200.97 1347.0,205.80 1348.0,210.62 1349.0,215.45 1349.9,219.80 1350.0,219.93 1351.0,221.21 1352.0,222.50 1353.0,223.17 1354.0,223.83 1355.0,224.50 1356.0,224.82 1357.0,225.15 1358.0,225.48 1359.0,225.80 1360.0,226.30 1361.0,226.30 1362.0,226.30 1363.0,226.30 1364.0,226.30 1365.0,226.30 1366.0,226.30 1367.0,226.30 1368.0,226.30 1369.0,226.30 1370.0,226.30 1371.0,226.30 1372.0,226.30 1373.0,226.30 1374.0,226.30 1375.0,226.30 1376.0,226.30 1377.0,226.30 1378.0,226.30 1379.0,226.30 1380.0,226.30 1381.0,226.30 1382.0,226.30 1383.0,225.80 1384.0,225.80 1385.0,225.80 1386.0,225.80 1387.0,225.80 1388.0,225.80 1389.0,225.80 1390.0,225.80 1391.0,225.80 1392.0,225.80 1393.0,225.80 1394.0,225.80 1395.0,225.80 1396.0,225.80 1397.0,225.80 1398.0,225.80 1399.0,225.80 1400.0,225.80 1401.0,225.80 1402.0,225.80 1403.0,225.80 1404.0,225.80 1405.0,225.80 1406.0,225.80 1407.0,225.80 1408.0,225.80 1409.0,225.80 1410.0,225.80 1411.0,225.80 1412.0,225.80 1413.0,225.80 1414.0,225.80 1415.0,225.80 1416.0,225.80 1417.0,225.80 1418.0,225.80 1419.0,225.80 1420.0,225.80 1421.0,225.80 1422.0,225.80 1423.0,225.80 1424.0,225.80 1425.0,225.80 1426.0,225.80 1427.0,225.80 1428.0,225.80 1429.0,225.80 1430.0,225.80 1431.0,225.80 1432.0,225.80 1433.0,225.80 1434.0,225.80 1435.0,225.80 1436.0,225.80 1437.0,225.80 1438.0,225.80 1439.0,225.80 1440.0,225.80 1441.0,225.80 1442.0,225.80 1443.0,225.80 1444.0,225.80 1445.0,225.80 1446.0,225.80 1447.0,225.80 1448.0,225.80 1449.0,225.80 1450.0,225.80 1451.0,225.80 1452.0,225.80 1453.0,225.80 1454.0,225.80 1455.0,225.80 1456.0,225.80 1457.0,225.80 1458.0,225.80 1459.0,225.80 1460.0,225.80 1461.0,225.80 1462.0,225.80 1463.0,225.80 1464.0,225.80 1465.0,225.80 1466.0,225.80 1467.0,225.80 1467,229 3,229" fill="#787821" shape-rendering="crispEdges"/></svg>
<div class="a" style="left:231px;top:-8px;width:106px;height:20px;background:#0f0f0f;border-radius:4px"></div>
<div class="t" style="left:236px;top:-7.47px;font-size:15.8px;letter-spacing:0.05px;color:#d2d2d2;">66ms (15FPS)</div>
<div class="a" style="left:231px;top:103px;width:111px;height:20px;background:#0f0f0f;border-radius:4px"></div>
<div class="t" style="left:236px;top:103.53px;font-size:15.8px;letter-spacing:0.05px;color:#d2d2d2;">33ms (30FPS)</div>
<div class="a" style="left:231px;top:158px;width:107px;height:20px;background:#0f0f0f;border-radius:4px"></div>
<div class="t" style="left:236px;top:158.53px;font-size:15.8px;letter-spacing:0.05px;color:#d2d2d2;">16ms (60FPS)</div>
<div class="a" style="left:228px;top:237px;width:1464px;height:1px;background:#657914;"></div>
<div class="a" style="left:228px;top:238px;width:1464px;height:1px;background:#4b5a1c;"></div>
<div class="a" style="left:228px;top:244px;width:1464px;height:1px;background:#30647d;"></div>
<div class="a" style="left:228px;top:245px;width:1464px;height:1px;background:#2d4a58;"></div>
<div class="a" style="left:228px;top:250px;width:1464px;height:1px;background:#784b19;"></div>
<div class="a" style="left:228px;top:251px;width:1464px;height:1px;background:#6a4419;"></div>
<div class="a" style="left:228px;top:256px;width:1464px;height:1px;background:#467378;"></div>
<div class="a" style="left:228px;top:257px;width:1464px;height:1px;background:#3e5c60;"></div>
<div class="a" style="left:228px;top:402px;width:1464px;height:1px;background:#657914;"></div>
<div class="a" style="left:228px;top:403px;width:1464px;height:1px;background:#4b5a1c;"></div>
<div class="a" style="left:228px;top:409px;width:1464px;height:1px;background:#30647d;"></div>
<div class="a" style="left:228px;top:410px;width:1464px;height:1px;background:#2d4a58;"></div>
<div class="a" style="left:228px;top:430px;width:1464px;height:1px;background:#5e8a80;"></div>
<div class="a" style="left:228px;top:431px;width:1464px;height:1px;background:#6a6a30;"></div>
<div class="a" style="left:228px;top:432px;width:1464px;height:1px;background:#3c3c26;"></div>
<div class="a" style="left:228px;top:444px;width:1464px;height:1px;background:#a08a18;"></div>
<div class="a" style="left:228px;top:445px;width:1464px;height:1px;background:#7a6a1c;"></div>
<div class="a" style="left:228px;top:456px;width:1464px;height:1px;background:#a05e18;"></div>
<div class="a" style="left:228px;top:457px;width:1464px;height:1px;background:#7a4a1c;"></div>
<div class="a" style="left:6px;top:40px;width:9px;height:9px;background:#7fa50f;box-sizing:border-box;border:1px solid rgba(0,0,0,0.35)"></div>
<div class="t" style="left:21px;top:33.53px;font-size:15.8px;letter-spacing:0.05px;color:#c4c4c4;">Rendering</div>
<div class="a" style="left:201px;top:42px;width:17px;height:1px;background:#656565;"></div>
<div class="a" style="left:201px;top:43px;width:17px;height:1px;background:#3a3a3a;"></div>
<div class="a" style="left:201px;top:46px;width:17px;height:1px;background:#656565;"></div>
<div class="a" style="left:201px;top:47px;width:17px;height:1px;background:#3a3a3a;"></div>
<div class="a" style="left:6px;top:60px;width:9px;height:9px;background:#3291be;box-sizing:border-box;border:1px solid rgba(0,0,0,0.35)"></div>
<div class="t" style="left:21px;top:53.53px;font-size:15.8px;letter-spacing:0.05px;color:#c4c4c4;">Scripts</div>
<div class="a" style="left:201px;top:62px;width:17px;height:1px;background:#656565;"></div>
<div class="a" style="left:201px;top:63px;width:17px;height:1px;background:#3a3a3a;"></div>
<div class="a" style="left:201px;top:66px;width:17px;height:1px;background:#656565;"></div>
<div class="a" style="left:201px;top:67px;width:17px;height:1px;background:#3a3a3a;"></div>
<div class="a" style="left:6px;top:80px;width:9px;height:9px;background:#e67d14;box-sizing:border-box;border:1px solid rgba(0,0,0,0.35)"></div>
<div class="t" style="left:21px;top:73.53px;font-size:15.8px;letter-spacing:0.05px;color:#c4c4c4;">Physics</div>
<div class="a" style="left:201px;top:82px;width:17px;height:1px;background:#656565;"></div>
<div class="a" style="left:201px;top:83px;width:17px;height:1px;background:#3a3a3a;"></div>
<div class="a" style="left:201px;top:86px;width:17px;height:1px;background:#656565;"></div>
<div class="a" style="left:201px;top:87px;width:17px;height:1px;background:#3a3a3a;"></div>
<div class="a" style="left:6px;top:100px;width:9px;height:9px;background:#4bb9c8;box-sizing:border-box;border:1px solid rgba(0,0,0,0.35)"></div>
<div class="t" style="left:21px;top:93.53px;font-size:15.8px;letter-spacing:0.05px;color:#c4c4c4;">Animation</div>
<div class="a" style="left:201px;top:102px;width:17px;height:1px;background:#656565;"></div>
<div class="a" style="left:201px;top:103px;width:17px;height:1px;background:#3a3a3a;"></div>
<div class="a" style="left:201px;top:106px;width:17px;height:1px;background:#656565;"></div>
<div class="a" style="left:201px;top:107px;width:17px;height:1px;background:#3a3a3a;"></div>
<div class="a" style="left:6px;top:120px;width:9px;height:9px;background:#78731a;box-sizing:border-box;border:1px solid rgba(0,0,0,0.35)"></div>
<div class="t" style="left:21px;top:113.53px;font-size:15.8px;letter-spacing:0.05px;color:#c4c4c4;">GarbageCollector</div>
<div class="a" style="left:201px;top:122px;width:17px;height:1px;background:#656565;"></div>
<div class="a" style="left:201px;top:123px;width:17px;height:1px;background:#3a3a3a;"></div>
<div class="a" style="left:201px;top:126px;width:17px;height:1px;background:#656565;"></div>
<div class="a" style="left:201px;top:127px;width:17px;height:1px;background:#3a3a3a;"></div>
<div class="a" style="left:6px;top:140px;width:9px;height:9px;background:#d7af0f;box-sizing:border-box;border:1px solid rgba(0,0,0,0.35)"></div>
<div class="t" style="left:21px;top:133.53px;font-size:15.8px;letter-spacing:0.05px;color:#c4c4c4;">VSync</div>
<div class="a" style="left:201px;top:142px;width:17px;height:1px;background:#656565;"></div>
<div class="a" style="left:201px;top:143px;width:17px;height:1px;background:#3a3a3a;"></div>
<div class="a" style="left:201px;top:146px;width:17px;height:1px;background:#656565;"></div>
<div class="a" style="left:201px;top:147px;width:17px;height:1px;background:#3a3a3a;"></div>
<div class="a" style="left:6px;top:160px;width:9px;height:9px;background:#aa2d0a;box-sizing:border-box;border:1px solid rgba(0,0,0,0.35)"></div>
<div class="t" style="left:21px;top:153.53px;font-size:15.8px;letter-spacing:0.05px;color:#c4c4c4;">Global Illumination</div>
<div class="a" style="left:201px;top:162px;width:17px;height:1px;background:#656565;"></div>
<div class="a" style="left:201px;top:163px;width:17px;height:1px;background:#3a3a3a;"></div>
<div class="a" style="left:201px;top:166px;width:17px;height:1px;background:#656565;"></div>
<div class="a" style="left:201px;top:167px;width:17px;height:1px;background:#3a3a3a;"></div>
<div class="a" style="left:6px;top:180px;width:9px;height:9px;background:#000000;box-sizing:border-box;border:1px solid rgba(0,0,0,0.35)"></div>
<div class="t" style="left:21px;top:173.53px;font-size:15.8px;letter-spacing:0.05px;color:#c4c4c4;">UI</div>
<div class="a" style="left:201px;top:182px;width:17px;height:1px;background:#656565;"></div>
<div class="a" style="left:201px;top:183px;width:17px;height:1px;background:#3a3a3a;"></div>
<div class="a" style="left:201px;top:186px;width:17px;height:1px;background:#656565;"></div>
<div class="a" style="left:201px;top:187px;width:17px;height:1px;background:#3a3a3a;"></div>
<div class="a" style="left:6px;top:200px;width:9px;height:9px;background:#828228;box-sizing:border-box;border:1px solid rgba(0,0,0,0.35)"></div>
<div class="t" style="left:21px;top:193.53px;font-size:15.8px;letter-spacing:0.05px;color:#c4c4c4;">Others</div>
<div class="a" style="left:201px;top:202px;width:17px;height:1px;background:#656565;"></div>
<div class="a" style="left:201px;top:203px;width:17px;height:1px;background:#3a3a3a;"></div>
<div class="a" style="left:201px;top:206px;width:17px;height:1px;background:#656565;"></div>
<div class="a" style="left:201px;top:207px;width:17px;height:1px;background:#3a3a3a;"></div>
<div class="a" style="left:6px;top:269px;width:9px;height:9px;background:#7fa50f;box-sizing:border-box;border:1px solid rgba(0,0,0,0.35)"></div>
<div class="t" style="left:21px;top:262.53px;font-size:15.8px;letter-spacing:0.05px;color:#c4c4c4;">Batches Count</div>
<div class="a" style="left:6px;top:289px;width:9px;height:9px;background:#3291be;box-sizing:border-box;border:1px solid rgba(0,0,0,0.35)"></div>
<div class="t" style="left:21px;top:282.53px;font-size:15.8px;letter-spacing:0.05px;color:#c4c4c4;">SetPass Calls Count</div>
<div class="a" style="left:6px;top:309px;width:9px;height:9px;background:#e67d14;box-sizing:border-box;border:1px solid rgba(0,0,0,0.35)"></div>
<div class="t" style="left:21px;top:302.53px;font-size:15.8px;letter-spacing:0.05px;color:#c4c4c4;">Triangles Count</div>
<div class="a" style="left:6px;top:329px;width:9px;height:9px;background:#4bb9c8;box-sizing:border-box;border:1px solid rgba(0,0,0,0.35)"></div>
<div class="t" style="left:21px;top:322.53px;font-size:15.8px;letter-spacing:0.05px;color:#c4c4c4;">Vertices Count</div>
<div class="a" style="left:6px;top:432px;width:9px;height:9px;background:#7fa50f;box-sizing:border-box;border:1px solid rgba(0,0,0,0.35)"></div>
<div class="t" style="left:21px;top:425.53px;font-size:15.8px;letter-spacing:0.05px;color:#c4c4c4;">Total Used Memory</div>
<div class="a" style="left:6px;top:452px;width:9px;height:9px;background:#3291be;box-sizing:border-box;border:1px solid rgba(0,0,0,0.35)"></div>
<div class="t" style="left:21px;top:445.53px;font-size:15.8px;letter-spacing:0.05px;color:#c4c4c4;">Texture Memory</div>
<div class="a" style="left:6px;top:472px;width:9px;height:9px;background:#e67d14;box-sizing:border-box;border:1px solid rgba(0,0,0,0.35)"></div>
<div class="t" style="left:21px;top:465.53px;font-size:15.8px;letter-spacing:0.05px;color:#c4c4c4;">Mesh Memory</div>
<div class="a" style="left:6px;top:492px;width:9px;height:9px;background:#4bb9c8;box-sizing:border-box;border:1px solid rgba(0,0,0,0.35)"></div>
<div class="t" style="left:21px;top:485.53px;font-size:15.8px;letter-spacing:0.05px;color:#c4c4c4;">Material Count</div>
<div class="a" style="left:6px;top:512px;width:9px;height:9px;background:#78731a;box-sizing:border-box;border:1px solid rgba(0,0,0,0.35)"></div>
<div class="t" style="left:21px;top:505.53px;font-size:15.8px;letter-spacing:0.05px;color:#c4c4c4;">Object Count</div>
<div class="a" style="left:6px;top:532px;width:9px;height:9px;background:#d7af0f;box-sizing:border-box;border:1px solid rgba(0,0,0,0.35)"></div>
<div class="t" style="left:21px;top:525.53px;font-size:15.8px;letter-spacing:0.05px;color:#c4c4c4;">GC Used Memory</div>
<div class="a" style="left:6px;top:552px;width:9px;height:9px;background:#aa2d0a;box-sizing:border-box;border:1px solid rgba(0,0,0,0.35)"></div>
<div class="t" style="left:21px;top:545.53px;font-size:15.8px;letter-spacing:0.05px;color:#c4c4c4;">GC Allocated In Frame</div>
<div class="t" style="left:31px;top:6.83px;font-size:17.8px;letter-spacing:0px;color:#c8c8c8;">CPU Usage</div>
<div class="t" style="left:31px;top:235.87px;font-size:17.7px;letter-spacing:0px;color:#c8c8c8;">Rendering</div>
<div class="t" style="left:31px;top:398.94px;font-size:17.5px;letter-spacing:0px;color:#c8c8c8;">Memory</div>
<svg class="a" style="left:4px;top:5px" width="24" height="24" viewBox="0 0 24 24"><path d="M6.03,12.8 A6.2,6.2 0 1 1 15.97,12.8 Z" fill="#c8c8c8"/><line x1="10.4" y1="9.5" x2="14" y2="6.3" stroke="#3a3a3a" stroke-width="1.3" stroke-linecap="round"/><text x="11" y="20.9" font-family="Liberation Sans" font-weight="bold" font-size="8.2" fill="#c8c8c8" text-anchor="middle" letter-spacing="0.9">CPU</text></svg>
<svg class="a" style="left:3px;top:236px" width="24" height="22" viewBox="0 0 24 22"><rect x="3.2" y="11" width="17.2" height="8.2" rx="1.2" fill="#c8c8c8"/><circle cx="8.6" cy="8.2" r="6.3" fill="#393939"/><rect x="6.1" y="13.3" width="12.7" height="3.5" rx="1.75" fill="#393939"/><circle cx="8.6" cy="8.2" r="5.5" fill="#c8c8c8"/><circle cx="9.4" cy="9.0" r="3.5" fill="#393939"/></svg>
<svg class="a" style="left:5px;top:399px" width="22" height="21" viewBox="0 0 22 21"><rect x="5.1" y="4.9" width="10.8" height="10.8" fill="none" stroke="#c8c8c8" stroke-width="2.3"/><g stroke="#c8c8c8" stroke-width="1"><line x1="6.5" y1="1" x2="6.5" y2="4"/><line x1="10.5" y1="1" x2="10.5" y2="4" stroke="#8a8a8a"/><line x1="14" y1="1" x2="14" y2="4"/><line x1="6.5" y1="16.5" x2="6.5" y2="19.5"/><line x1="10.5" y1="16.5" x2="10.5" y2="19.5" stroke="#8a8a8a"/><line x1="14" y1="16.5" x2="14" y2="19.5"/><line x1="1" y1="6.5" x2="4" y2="6.5"/><line x1="1" y1="10" x2="4" y2="10" stroke="#8a8a8a"/><line x1="1" y1="13.5" x2="4" y2="13.5"/><line x1="17" y1="6.5" x2="20" y2="6.5"/><line x1="17" y1="10" x2="20" y2="10" stroke="#8a8a8a"/><line x1="17" y1="13.5" x2="20" y2="13.5"/></g></svg>
<div class="t" style="left:6px;top:577.53px;font-size:15.8px;letter-spacing:0.05px;color:#c4c4c4;">Hierarchy</div>
<svg class="a" style="left:208px;top:583px" width="12" height="8"><polygon points="1,1 10,1 5.5,6.5" fill="#c4c4c4"/></svg>
<div class="a" style="left:224px;top:576px;width:2px;height:23px;background:#232323;"></div>
<div class="t" style="left:230px;top:577.53px;font-size:15.8px;letter-spacing:0.05px;color:#c4c4c4;">Live</div>
<div class="a" style="left:269px;top:576px;width:1px;height:23px;background:#232323;"></div>
<div class="t" style="left:274px;top:577.53px;font-size:15.8px;letter-spacing:0.05px;color:#c4c4c4;">Main Thread</div>
<svg class="a" style="left:440px;top:583px" width="12" height="8"><polygon points="1,1 11,1 6,6.5" fill="#c4c4c4"/></svg>
<div class="a" style="left:457px;top:576px;width:1px;height:23px;background:#232323;"></div>
<div class="t" style="left:790px;top:577.53px;font-size:15.8px;letter-spacing:0.05px;color:#c4c4c4;">CPU:114.17ms</div>
<div class="t" style="left:906px;top:577.53px;font-size:15.8px;letter-spacing:0.05px;color:#c4c4c4;">GPU:-<span style="margin-left:2px">-</span><span style="margin-left:1px">ms</span></div>
<div class="a" style="left:1314px;top:577px;width:375px;height:20px;box-sizing:border-box;background:#2a2a2a;border:1px solid #1e1e1e;border-top-color:#0e0e0e;border-radius:4px"></div>
<svg class="a" style="left:1318px;top:581px" width="14" height="14" viewBox="0 0 14 14"><circle cx="5.2" cy="5.2" r="2.6" fill="none" stroke="#c8c8c8" stroke-width="1.3"/><line x1="7.2" y1="7.2" x2="10.6" y2="10.6" stroke="#c8c8c8" stroke-width="1.5" stroke-linecap="round"/></svg>
<div class="a" style="left:1691px;top:576px;width:1px;height:23px;background:#262626;"></div>
<div class="t" style="left:6px;top:608.53px;font-size:15.8px;letter-spacing:0.05px;color:#9a9a9a;">Overview</div>
<div class="a" style="left:249px;top:605px;width:1px;height:21px;background:#555555;"></div>
<div class="t" style="left:255px;top:608.53px;font-size:15.8px;letter-spacing:0.05px;color:#9a9a9a;">Total</div>
<div class="a" style="left:349px;top:605px;width:1px;height:21px;background:#555555;"></div>
<div class="t" style="left:355px;top:608.53px;font-size:15.8px;letter-spacing:0.05px;color:#9a9a9a;">Self</div>
<div class="a" style="left:449px;top:605px;width:1px;height:21px;background:#555555;"></div>
<div class="t" style="left:455px;top:608.53px;font-size:15.8px;letter-spacing:0.05px;color:#9a9a9a;">Calls</div>
<div class="a" style="left:549px;top:605px;width:1px;height:21px;background:#555555;"></div>
<div class="t" style="left:555px;top:608.53px;font-size:15.8px;letter-spacing:0.05px;color:#9a9a9a;">GC Alloc</div>
<div class="a" style="left:649px;top:605px;width:1px;height:21px;background:#555555;"></div>
<div class="t" style="left:655px;top:608.53px;font-size:15.8px;letter-spacing:0.05px;color:#9a9a9a;">Time ms</div>
<div class="a" style="left:749px;top:605px;width:1px;height:21px;background:#555555;"></div>
<div class="t" style="left:755px;top:608.53px;font-size:15.8px;letter-spacing:0.05px;color:#9a9a9a;">Self ms</div>
<div class="a" style="left:849px;top:605px;width:1px;height:21px;background:#555555;"></div>
<div class="a" style="left:880px;top:605px;width:1px;height:21px;background:#555555;"></div>
<svg class="a" style="left:733px;top:606px" width="8" height="7"><polygon points="0.5,0.5 7,0.5 3.75,6" fill="#c4c4c4"/></svg>
<svg class="a" style="left:855px;top:610px" width="18" height="18" viewBox="0 0 18 18"><polygon points="9.5,1.9 16.2,16.1 2.6,16.1" fill="#d0d0d0" stroke="#252525" stroke-width="1" stroke-linejoin="round" paint-order="stroke"/><rect x="9.1" y="5.5" width="0.9" height="6.5" fill="#ededed"/><rect x="9.1" y="13.6" width="0.9" height="1" fill="#ededed"/></svg>
<div class="a" style="left:0px;top:632px;width:1692px;height:20px;background:#2c5d87;"></div>
<div class="a" style="left:22px;top:632px;width:226px;height:20px;overflow:hidden">
<div class="t" style="left:0;top:-0.47px;font-size:15.8px;letter-spacing:0.05px;color:#ffffff">EditorLoop</div></div>
<div class="t" style="left:256px;top:631.53px;font-size:15.8px;letter-spacing:0.05px;color:#ffffff;">99.5%</div>
<div class="t" style="left:356px;top:631.53px;font-size:15.8px;letter-spacing:0.05px;color:#ffffff;">99.5%</div>
<div class="t" style="left:456px;top:631.53px;font-size:15.8px;letter-spacing:0.05px;color:#ffffff;">3</div>
<div class="t" style="left:556px;top:631.53px;font-size:15.8px;letter-spacing:0.05px;color:#ffffff;">0 B</div>
<div class="t" style="left:656px;top:631.53px;font-size:15.8px;letter-spacing:0.05px;color:#ffffff;">113.68</div>
<div class="t" style="left:756px;top:631.53px;font-size:15.8px;letter-spacing:0.05px;color:#ffffff;">113.68</div>
<svg class="a" style="left:4px;top:656px" width="12" height="11"><polygon points="1,1 11,1 6,9.5" fill="#6f6f6f"/></svg>
<div class="a" style="left:22px;top:652px;width:226px;height:20px;overflow:hidden">
<div class="t" style="left:0;top:-0.47px;font-size:15.8px;letter-spacing:0.05px;color:#c4c4c4">PlayerLoop</div></div>
<div class="t" style="left:256px;top:651.53px;font-size:15.8px;letter-spacing:0.05px;color:#c4c4c4;">0.2%</div>
<div class="t" style="left:356px;top:651.53px;font-size:15.8px;letter-spacing:0.05px;color:#c4c4c4;">0.0%</div>
<div class="t" style="left:456px;top:651.53px;font-size:15.8px;letter-spacing:0.05px;color:#c4c4c4;">3</div>
<div class="t" style="left:556px;top:651.53px;font-size:15.8px;letter-spacing:0.05px;color:#c4c4c4;">0 B</div>
<div class="t" style="left:656px;top:651.53px;font-size:15.8px;letter-spacing:0.05px;color:#c4c4c4;">0.32</div>
<div class="t" style="left:756px;top:651.53px;font-size:15.8px;letter-spacing:0.05px;color:#c4c4c4;">0.03</div>
<svg class="a" style="left:23px;top:675px" width="11" height="13"><polygon points="1,1 10,6 1,11" fill="#6f6f6f"/></svg>
<div class="a" style="left:40px;top:672px;width:208px;height:20px;overflow:hidden">
<div class="t" style="left:0;top:-0.47px;font-size:15.8px;letter-spacing:0.05px;color:#c4c4c4">Camera.Render</div></div>
<div class="t" style="left:256px;top:671.53px;font-size:15.8px;letter-spacing:0.05px;color:#c4c4c4;">0.1%</div>
<div class="t" style="left:356px;top:671.53px;font-size:15.8px;letter-spacing:0.05px;color:#c4c4c4;">0.0%</div>
<div class="t" style="left:456px;top:671.53px;font-size:15.8px;letter-spacing:0.05px;color:#c4c4c4;">1</div>
<div class="t" style="left:556px;top:671.53px;font-size:15.8px;letter-spacing:0.05px;color:#c4c4c4;">0 B</div>
<div class="t" style="left:656px;top:671.53px;font-size:15.8px;letter-spacing:0.05px;color:#c4c4c4;">0.15</div>
<div class="t" style="left:756px;top:671.53px;font-size:15.8px;letter-spacing:0.05px;color:#c4c4c4;">0.01</div>
<svg class="a" style="left:23px;top:695px" width="11" height="13"><polygon points="1,1 10,6 1,11" fill="#6f6f6f"/></svg>
<div class="a" style="left:40px;top:692px;width:208px;height:20px;overflow:hidden">
<div class="t" style="left:0;top:-0.47px;font-size:15.8px;letter-spacing:0.05px;color:#c4c4c4">EarlyUpdate.PollPlayerConnection</div></div>
<div class="t" style="left:256px;top:691.53px;font-size:15.8px;letter-spacing:0.05px;color:#c4c4c4;">0.0%</div>
<div class="t" style="left:356px;top:691.53px;font-size:15.8px;letter-spacing:0.05px;color:#c4c4c4;">0.0%</div>
<div class="t" style="left:456px;top:691.53px;font-size:15.8px;letter-spacing:0.05px;color:#c4c4c4;">1</div>
<div class="t" style="left:556px;top:691.53px;font-size:15.8px;letter-spacing:0.05px;color:#c4c4c4;">0 B</div>
<div class="t" style="left:656px;top:691.53px;font-size:15.8px;letter-spacing:0.05px;color:#c4c4c4;">0.01</div>
<div class="t" style="left:756px;top:691.53px;font-size:15.8px;letter-spacing:0.05px;color:#c4c4c4;">0.00</div>
<svg class="a" style="left:23px;top:715px" width="11" height="13"><polygon points="1,1 10,6 1,11" fill="#6f6f6f"/></svg>
<div class="a" style="left:40px;top:712px;width:208px;height:20px;overflow:hidden">
<div class="t" style="left:0;top:-0.47px;font-size:15.8px;letter-spacing:0.05px;color:#c4c4c4">PostLateUpdate.UpdateAudio</div></div>
<div class="t" style="left:256px;top:711.53px;font-size:15.8px;letter-spacing:0.05px;color:#c4c4c4;">0.0%</div>
<div class="t" style="left:356px;top:711.53px;font-size:15.8px;letter-spacing:0.05px;color:#c4c4c4;">0.0%</div>
<div class="t" style="left:456px;top:711.53px;font-size:15.8px;letter-spacing:0.05px;color:#c4c4c4;">1</div>
<div class="t" style="left:556px;top:711.53px;font-size:15.8px;letter-spacing:0.05px;color:#c4c4c4;">0 B</div>
<div class="t" style="left:656px;top:711.53px;font-size:15.8px;letter-spacing:0.05px;color:#c4c4c4;">0.01</div>
<div class="t" style="left:756px;top:711.53px;font-size:15.8px;letter-spacing:0.05px;color:#c4c4c4;">0.00</div>
<svg class="a" style="left:23px;top:735px" width="11" height="13"><polygon points="1,1 10,6 1,11" fill="#6f6f6f"/></svg>
<div class="a" style="left:40px;top:732px;width:208px;height:20px;overflow:hidden">
<div class="t" style="left:0;top:-0.47px;font-size:15.8px;letter-spacing:0.05px;color:#c4c4c4">PreUpdate.SendMouseEvents</div></div>
<div class="t" style="left:256px;top:731.53px;font-size:15.8px;letter-spacing:0.05px;color:#c4c4c4;">0.0%</div>
<div class="t" style="left:356px;top:731.53px;font-size:15.8px;letter-spacing:0.05px;color:#c4c4c4;">0.0%</div>
<div class="t" style="left:456px;top:731.53px;font-size:15.8px;letter-spacing:0.05px;color:#c4c4c4;">1</div>
<div class="t" style="left:556px;top:731.53px;font-size:15.8px;letter-spacing:0.05px;color:#c4c4c4;">0 B</div>
<div class="t" style="left:656px;top:731.53px;font-size:15.8px;letter-spacing:0.05px;color:#c4c4c4;">0.00</div>
<div class="t" style="left:756px;top:731.53px;font-size:15.8px;letter-spacing:0.05px;color:#c4c4c4;">0.00</div>
<svg class="a" style="left:23px;top:755px" width="11" height="13"><polygon points="1,1 10,6 1,11" fill="#6f6f6f"/></svg>
<div class="a" style="left:40px;top:752px;width:208px;height:20px;overflow:hidden">
<div class="t" style="left:0;top:-0.47px;font-size:15.8px;letter-spacing:0.05px;color:#c4c4c4">UGUI.Rendering.EmitWorldScreenspaceCameraGeometry</div></div>
<div class="t" style="left:256px;top:751.53px;font-size:15.8px;letter-spacing:0.05px;color:#c4c4c4;">0.0%</div>
<div class="t" style="left:356px;top:751.53px;font-size:15.8px;letter-spacing:0.05px;color:#c4c4c4;">0.0%</div>
<div class="t" style="left:456px;top:751.53px;font-size:15.8px;letter-spacing:0.05px;color:#c4c4c4;">1</div>
<div class="t" style="left:556px;top:751.53px;font-size:15.8px;letter-spacing:0.05px;color:#c4c4c4;">0 B</div>
<div class="t" style="left:656px;top:751.53px;font-size:15.8px;letter-spacing:0.05px;color:#c4c4c4;">0.00</div>
<div class="t" style="left:756px;top:751.53px;font-size:15.8px;letter-spacing:0.05px;color:#c4c4c4;">0.00</div>
<svg class="a" style="left:23px;top:775px" width="11" height="13"><polygon points="1,1 10,6 1,11" fill="#6f6f6f"/></svg>
<div class="a" style="left:40px;top:772px;width:208px;height:20px;overflow:hidden">
<div class="t" style="left:0;top:-0.47px;font-size:15.8px;letter-spacing:0.05px;color:#c4c4c4">PreLateUpdate.EndGraphicsJobsAfterScriptUpdate</div></div>
<div class="t" style="left:256px;top:771.53px;font-size:15.8px;letter-spacing:0.05px;color:#c4c4c4;">0.0%</div>
<div class="t" style="left:356px;top:771.53px;font-size:15.8px;letter-spacing:0.05px;color:#c4c4c4;">0.0%</div>
<div class="t" style="left:456px;top:771.53px;font-size:15.8px;letter-spacing:0.05px;color:#c4c4c4;">1</div>
<div class="t" style="left:556px;top:771.53px;font-size:15.8px;letter-spacing:0.05px;color:#c4c4c4;">0 B</div>
<div class="t" style="left:656px;top:771.53px;font-size:15.8px;letter-spacing:0.05px;color:#c4c4c4;">0.00</div>
<div class="t" style="left:756px;top:771.53px;font-size:15.8px;letter-spacing:0.05px;color:#c4c4c4;">0.00</div>
<svg class="a" style="left:23px;top:795px" width="11" height="13"><polygon points="1,1 10,6 1,11" fill="#6f6f6f"/></svg>
<div class="a" style="left:40px;top:792px;width:208px;height:20px;overflow:hidden">
<div class="t" style="left:0;top:-0.47px;font-size:15.8px;letter-spacing:0.05px;color:#c4c4c4">PostLateUpdate.UpdateCustomRenderTextures</div></div>
<div class="t" style="left:256px;top:791.53px;font-size:15.8px;letter-spacing:0.05px;color:#c4c4c4;">0.0%</div>
<div class="t" style="left:356px;top:791.53px;font-size:15.8px;letter-spacing:0.05px;color:#c4c4c4;">0.0%</div>
<div class="t" style="left:456px;top:791.53px;font-size:15.8px;letter-spacing:0.05px;color:#c4c4c4;">1</div>
<div class="t" style="left:556px;top:791.53px;font-size:15.8px;letter-spacing:0.05px;color:#c4c4c4;">0 B</div>
<div class="t" style="left:656px;top:791.53px;font-size:15.8px;letter-spacing:0.05px;color:#c4c4c4;">0.00</div>
<div class="t" style="left:756px;top:791.53px;font-size:15.8px;letter-spacing:0.05px;color:#c4c4c4;">0.00</div>
<svg class="a" style="left:23px;top:815px" width="11" height="13"><polygon points="1,1 10,6 1,11" fill="#6f6f6f"/></svg>
<div class="a" style="left:40px;top:812px;width:208px;height:20px;overflow:hidden">
<div class="t" style="left:0;top:-0.47px;font-size:15.8px;letter-spacing:0.05px;color:#c4c4c4">PreLateUpdate.ParticleSystemBeginUpdateAll</div></div>
<div class="t" style="left:256px;top:811.53px;font-size:15.8px;letter-spacing:0.05px;color:#c4c4c4;">0.0%</div>
<div class="t" style="left:356px;top:811.53px;font-size:15.8px;letter-spacing:0.05px;color:#c4c4c4;">0.0%</div>
<div class="t" style="left:456px;top:811.53px;font-size:15.8px;letter-spacing:0.05px;color:#c4c4c4;">1</div>
<div class="t" style="left:556px;top:811.53px;font-size:15.8px;letter-spacing:0.05px;color:#c4c4c4;">0 B</div>
<div class="t" style="left:656px;top:811.53px;font-size:15.8px;letter-spacing:0.05px;color:#c4c4c4;">0.00</div>
<div class="t" style="left:756px;top:811.53px;font-size:15.8px;letter-spacing:0.05px;color:#c4c4c4;">0.00</div>
<svg class="a" style="left:23px;top:835px" width="11" height="13"><polygon points="1,1 10,6 1,11" fill="#6f6f6f"/></svg>
<div class="a" style="left:40px;top:832px;width:208px;height:20px;overflow:hidden">
<div class="t" style="left:0;top:-0.47px;font-size:15.8px;letter-spacing:0.05px;color:#c4c4c4">EarlyUpdate.ProcessRemoteInput</div></div>
<div class="t" style="left:256px;top:831.53px;font-size:15.8px;letter-spacing:0.05px;color:#c4c4c4;">0.0%</div>
<div class="t" style="left:356px;top:831.53px;font-size:15.8px;letter-spacing:0.05px;color:#c4c4c4;">0.0%</div>
<div class="t" style="left:456px;top:831.53px;font-size:15.8px;letter-spacing:0.05px;color:#c4c4c4;">1</div>
<div class="t" style="left:556px;top:831.53px;font-size:15.8px;letter-spacing:0.05px;color:#c4c4c4;">0 B</div>
<div class="t" style="left:656px;top:831.53px;font-size:15.8px;letter-spacing:0.05px;color:#c4c4c4;">0.00</div>
<div class="t" style="left:756px;top:831.53px;font-size:15.8px;letter-spacing:0.05px;color:#c4c4c4;">0.00</div>
<svg class="a" style="left:23px;top:855px" width="11" height="13"><polygon points="1,1 10,6 1,11" fill="#6f6f6f"/></svg>
<div class="a" style="left:40px;top:852px;width:208px;height:20px;overflow:hidden">
<div class="t" style="left:0;top:-0.47px;font-size:15.8px;letter-spacing:0.05px;color:#c4c4c4">EarlyUpdate.UpdatePreloading</div></div>
<div class="t" style="left:256px;top:851.53px;font-size:15.8px;letter-spacing:0.05px;color:#c4c4c4;">0.0%</div>
<div class="t" style="left:356px;top:851.53px;font-size:15.8px;letter-spacing:0.05px;color:#c4c4c4;">0.0%</div>
<div class="t" style="left:456px;top:851.53px;font-size:15.8px;letter-spacing:0.05px;color:#c4c4c4;">1</div>
<div class="t" style="left:556px;top:851.53px;font-size:15.8px;letter-spacing:0.05px;color:#c4c4c4;">0 B</div>
<div class="t" style="left:656px;top:851.53px;font-size:15.8px;letter-spacing:0.05px;color:#c4c4c4;">0.00</div>
<div class="t" style="left:756px;top:851.53px;font-size:15.8px;letter-spacing:0.05px;color:#c4c4c4;">0.00</div>
<svg class="a" style="left:23px;top:875px" width="11" height="13"><polygon points="1,1 10,6 1,11" fill="#6f6f6f"/></svg>
<div class="a" style="left:40px;top:872px;width:208px;height:20px;overflow:hidden">
<div class="t" style="left:0;top:-0.47px;font-size:15.8px;letter-spacing:0.05px;color:#c4c4c4">PlayerEndOfFrame</div></div>
<div class="t" style="left:256px;top:871.53px;font-size:15.8px;letter-spacing:0.05px;color:#c4c4c4;">0.0%</div>
<div class="t" style="left:356px;top:871.53px;font-size:15.8px;letter-spacing:0.05px;color:#c4c4c4;">0.0%</div>
<div class="t" style="left:456px;top:871.53px;font-size:15.8px;letter-spacing:0.05px;color:#c4c4c4;">1</div>
<div class="t" style="left:556px;top:871.53px;font-size:15.8px;letter-spacing:0.05px;color:#c4c4c4;">0 B</div>
<div class="t" style="left:656px;top:871.53px;font-size:15.8px;letter-spacing:0.05px;color:#c4c4c4;">0.00</div>
<div class="t" style="left:756px;top:871.53px;font-size:15.8px;letter-spacing:0.05px;color:#c4c4c4;">0.00</div>
<svg class="a" style="left:23px;top:895px" width="11" height="13"><polygon points="1,1 10,6 1,11" fill="#6f6f6f"/></svg>
<div class="a" style="left:40px;top:892px;width:208px;height:20px;overflow:hidden">
<div class="t" style="left:0;top:-0.47px;font-size:15.8px;letter-spacing:0.05px;color:#c4c4c4">FrameEvents.NewInputBeforeRenderFrameEvent</div></div>
<div class="t" style="left:256px;top:891.53px;font-size:15.8px;letter-spacing:0.05px;color:#c4c4c4;">0.0%</div>
<div class="t" style="left:356px;top:891.53px;font-size:15.8px;letter-spacing:0.05px;color:#c4c4c4;">0.0%</div>
<div class="t" style="left:456px;top:891.53px;font-size:15.8px;letter-spacing:0.05px;color:#c4c4c4;">1</div>
<div class="t" style="left:556px;top:891.53px;font-size:15.8px;letter-spacing:0.05px;color:#c4c4c4;">0 B</div>
<div class="t" style="left:656px;top:891.53px;font-size:15.8px;letter-spacing:0.05px;color:#c4c4c4;">0.00</div>
<div class="t" style="left:756px;top:891.53px;font-size:15.8px;letter-spacing:0.05px;color:#c4c4c4;">0.00</div>
<svg class="a" style="left:23px;top:915px" width="11" height="13"><polygon points="1,1 10,6 1,11" fill="#6f6f6f"/></svg>
<div class="a" style="left:40px;top:912px;width:208px;height:20px;overflow:hidden">
<div class="t" style="left:0;top:-0.47px;font-size:15.8px;letter-spacing:0.05px;color:#c4c4c4">EarlyUpdate.PlayerCleanupCachedData</div></div>
<div class="t" style="left:256px;top:911.53px;font-size:15.8px;letter-spacing:0.05px;color:#c4c4c4;">0.0%</div>
<div class="t" style="left:356px;top:911.53px;font-size:15.8px;letter-spacing:0.05px;color:#c4c4c4;">0.0%</div>
<div class="t" style="left:456px;top:911.53px;font-size:15.8px;letter-spacing:0.05px;color:#c4c4c4;">1</div>
<div class="t" style="left:556px;top:911.53px;font-size:15.8px;letter-spacing:0.05px;color:#c4c4c4;">0 B</div>
<div class="t" style="left:656px;top:911.53px;font-size:15.8px;letter-spacing:0.05px;color:#c4c4c4;">0.00</div>
<div class="t" style="left:756px;top:911.53px;font-size:15.8px;letter-spacing:0.05px;color:#c4c4c4;">0.00</div>
<div class="a" style="left:40px;top:932px;width:208px;height:20px;overflow:hidden">
<div class="t" style="left:0;top:-0.47px;font-size:15.8px;letter-spacing:0.05px;color:#c4c4c4">GUIUtility.SetSkin() [Invoke]</div></div>
<div class="t" style="left:256px;top:931.53px;font-size:15.8px;letter-spacing:0.05px;color:#c4c4c4;">0.0%</div>
<div class="t" style="left:356px;top:931.53px;font-size:15.8px;letter-spacing:0.05px;color:#c4c4c4;">0.0%</div>
<div class="t" style="left:456px;top:931.53px;font-size:15.8px;letter-spacing:0.05px;color:#c4c4c4;">1</div>
<div class="t" style="left:556px;top:931.53px;font-size:15.8px;letter-spacing:0.05px;color:#c4c4c4;">0 B</div>
<div class="t" style="left:656px;top:931.53px;font-size:15.8px;letter-spacing:0.05px;color:#c4c4c4;">0.00</div>
<div class="t" style="left:756px;top:931.53px;font-size:15.8px;letter-spacing:0.05px;color:#c4c4c4;">0.00</div>
<svg class="a" style="left:23px;top:955px" width="11" height="13"><polygon points="1,1 10,6 1,11" fill="#6f6f6f"/></svg>
<div class="a" style="left:40px;top:952px;width:208px;height:20px;overflow:hidden">
<div class="t" style="left:0;top:-0.47px;font-size:15.8px;letter-spacing:0.05px;color:#c4c4c4">GUI.Repaint</div></div>
<div class="t" style="left:256px;top:951.53px;font-size:15.8px;letter-spacing:0.05px;color:#c4c4c4;">0.0%</div>
<div class="t" style="left:356px;top:951.53px;font-size:15.8px;letter-spacing:0.05px;color:#c4c4c4;">0.0%</div>
<div class="t" style="left:456px;top:951.53px;font-size:15.8px;letter-spacing:0.05px;color:#c4c4c4;">1</div>
<div class="t" style="left:556px;top:951.53px;font-size:15.8px;letter-spacing:0.05px;color:#c4c4c4;">0 B</div>
<div class="t" style="left:656px;top:951.53px;font-size:15.8px;letter-spacing:0.05px;color:#c4c4c4;">0.00</div>
<div class="t" style="left:756px;top:951.53px;font-size:15.8px;letter-spacing:0.05px;color:#c4c4c4;">0.00</div>
<svg class="a" style="left:23px;top:975px" width="11" height="13"><polygon points="1,1 10,6 1,11" fill="#6f6f6f"/></svg>
<div class="a" style="left:40px;top:972px;width:208px;height:20px;overflow:hidden">
<div class="t" style="left:0;top:-0.47px;font-size:15.8px;letter-spacing:0.05px;color:#c4c4c4">Update.ScriptRunDelayedTasks</div></div>
<div class="t" style="left:256px;top:971.53px;font-size:15.8px;letter-spacing:0.05px;color:#c4c4c4;">0.0%</div>
<div class="t" style="left:356px;top:971.53px;font-size:15.8px;letter-spacing:0.05px;color:#c4c4c4;">0.0%</div>
<div class="t" style="left:456px;top:971.53px;font-size:15.8px;letter-spacing:0.05px;color:#c4c4c4;">1</div>
<div class="t" style="left:556px;top:971.53px;font-size:15.8px;letter-spacing:0.05px;color:#c4c4c4;">0 B</div>
<div class="t" style="left:656px;top:971.53px;font-size:15.8px;letter-spacing:0.05px;color:#c4c4c4;">0.00</div>
<div class="t" style="left:756px;top:971.53px;font-size:15.8px;letter-spacing:0.05px;color:#c4c4c4;">0.00</div>
<svg class="a" style="left:23px;top:995px" width="11" height="13"><polygon points="1,1 10,6 1,11" fill="#6f6f6f"/></svg>
<div class="a" style="left:40px;top:992px;width:208px;height:20px;overflow:hidden">
<div class="t" style="left:0;top:-0.47px;font-size:15.8px;letter-spacing:0.05px;color:#c4c4c4">PreUpdate.NewInputUpdate</div></div>
<div class="t" style="left:256px;top:991.53px;font-size:15.8px;letter-spacing:0.05px;color:#c4c4c4;">0.0%</div>
<div class="t" style="left:356px;top:991.53px;font-size:15.8px;letter-spacing:0.05px;color:#c4c4c4;">0.0%</div>
<div class="t" style="left:456px;top:991.53px;font-size:15.8px;letter-spacing:0.05px;color:#c4c4c4;">1</div>
<div class="t" style="left:556px;top:991.53px;font-size:15.8px;letter-spacing:0.05px;color:#c4c4c4;">0 B</div>
<div class="t" style="left:656px;top:991.53px;font-size:15.8px;letter-spacing:0.05px;color:#c4c4c4;">0.00</div>
<div class="t" style="left:756px;top:991.53px;font-size:15.8px;letter-spacing:0.05px;color:#c4c4c4;">0.00</div>
<div class="a" style="left:40px;top:1012px;width:208px;height:20px;overflow:hidden">
<div class="t" style="left:0;top:-0.47px;font-size:15.8px;letter-spacing:0.05px;color:#c4c4c4">PostLateUpdate.MemoryFrameMaintenance</div></div>
<div class="t" style="left:256px;top:1011.53px;font-size:15.8px;letter-spacing:0.05px;color:#c4c4c4;">0.0%</div>
<div class="t" style="left:356px;top:1011.53px;font-size:15.8px;letter-spacing:0.05px;color:#c4c4c4;">0.0%</div>
<div class="t" style="left:456px;top:1011.53px;font-size:15.8px;letter-spacing:0.05px;color:#c4c4c4;">1</div>
<div class="t" style="left:556px;top:1011.53px;font-size:15.8px;letter-spacing:0.05px;color:#c4c4c4;">0 B</div>
<div class="t" style="left:656px;top:1011.53px;font-size:15.8px;letter-spacing:0.05px;color:#c4c4c4;">0.00</div>
<div class="t" style="left:756px;top:1011.53px;font-size:15.8px;letter-spacing:0.05px;color:#c4c4c4;">0.00</div>
<div class="a" style="left:40px;top:1032px;width:208px;height:20px;overflow:hidden">
<div class="t" style="left:0;top:-0.47px;font-size:15.8px;letter-spacing:0.05px;color:#c4c4c4">UpdateScreenManagerAndInput</div></div>
<div class="t" style="left:256px;top:1031.53px;font-size:15.8px;letter-spacing:0.05px;color:#c4c4c4;">0.0%</div>
<div class="t" style="left:356px;top:1031.53px;font-size:15.8px;letter-spacing:0.05px;color:#c4c4c4;">0.0%</div>
<div class="t" style="left:456px;top:1031.53px;font-size:15.8px;letter-spacing:0.05px;color:#c4c4c4;">1</div>
<div class="t" style="left:556px;top:1031.53px;font-size:15.8px;letter-spacing:0.05px;color:#c4c4c4;">0 B</div>
<div class="t" style="left:656px;top:1031.53px;font-size:15.8px;letter-spacing:0.05px;color:#c4c4c4;">0.00</div>
<div class="t" style="left:756px;top:1031.53px;font-size:15.8px;letter-spacing:0.05px;color:#c4c4c4;">0.00</div>
<svg class="a" style="left:23px;top:1055px" width="11" height="13"><polygon points="1,1 10,6 1,11" fill="#6f6f6f"/></svg>
<div class="a" style="left:40px;top:1052px;width:208px;height:20px;overflow:hidden">
<div class="t" style="left:0;top:-0.47px;font-size:15.8px;letter-spacing:0.05px;color:#c4c4c4">ScriptableRuntimeReflectionSystemWrapper</div></div>
<div class="t" style="left:256px;top:1051.53px;font-size:15.8px;letter-spacing:0.05px;color:#c4c4c4;">0.0%</div>
<div class="t" style="left:356px;top:1051.53px;font-size:15.8px;letter-spacing:0.05px;color:#c4c4c4;">0.0%</div>
<div class="t" style="left:456px;top:1051.53px;font-size:15.8px;letter-spacing:0.05px;color:#c4c4c4;">1</div>
<div class="t" style="left:556px;top:1051.53px;font-size:15.8px;letter-spacing:0.05px;color:#c4c4c4;">0 B</div>
<div class="t" style="left:656px;top:1051.53px;font-size:15.8px;letter-spacing:0.05px;color:#c4c4c4;">0.00</div>
<div class="t" style="left:756px;top:1051.53px;font-size:15.8px;letter-spacing:0.05px;color:#c4c4c4;">0.00</div>
<svg class="a" style="left:23px;top:1075px" width="11" height="13"><polygon points="1,1 10,6 1,11" fill="#6f6f6f"/></svg>
<div class="a" style="left:40px;top:1072px;width:208px;height:20px;overflow:hidden">
<div class="t" style="left:0;top:-0.47px;font-size:15.8px;letter-spacing:0.05px;color:#c4c4c4">TimeUpdate.WaitForLastPresentationAndUpdateTime</div></div>
<div class="t" style="left:256px;top:1071.53px;font-size:15.8px;letter-spacing:0.05px;color:#c4c4c4;">0.0%</div>
<div class="t" style="left:356px;top:1071.53px;font-size:15.8px;letter-spacing:0.05px;color:#c4c4c4;">0.0%</div>
<div class="t" style="left:456px;top:1071.53px;font-size:15.8px;letter-spacing:0.05px;color:#c4c4c4;">1</div>
<div class="t" style="left:556px;top:1071.53px;font-size:15.8px;letter-spacing:0.05px;color:#c4c4c4;">0 B</div>
<div class="t" style="left:656px;top:1071.53px;font-size:15.8px;letter-spacing:0.05px;color:#c4c4c4;">0.00</div>
<div class="t" style="left:756px;top:1071.53px;font-size:15.8px;letter-spacing:0.05px;color:#c4c4c4;">0.00</div>
</div></body></html>
